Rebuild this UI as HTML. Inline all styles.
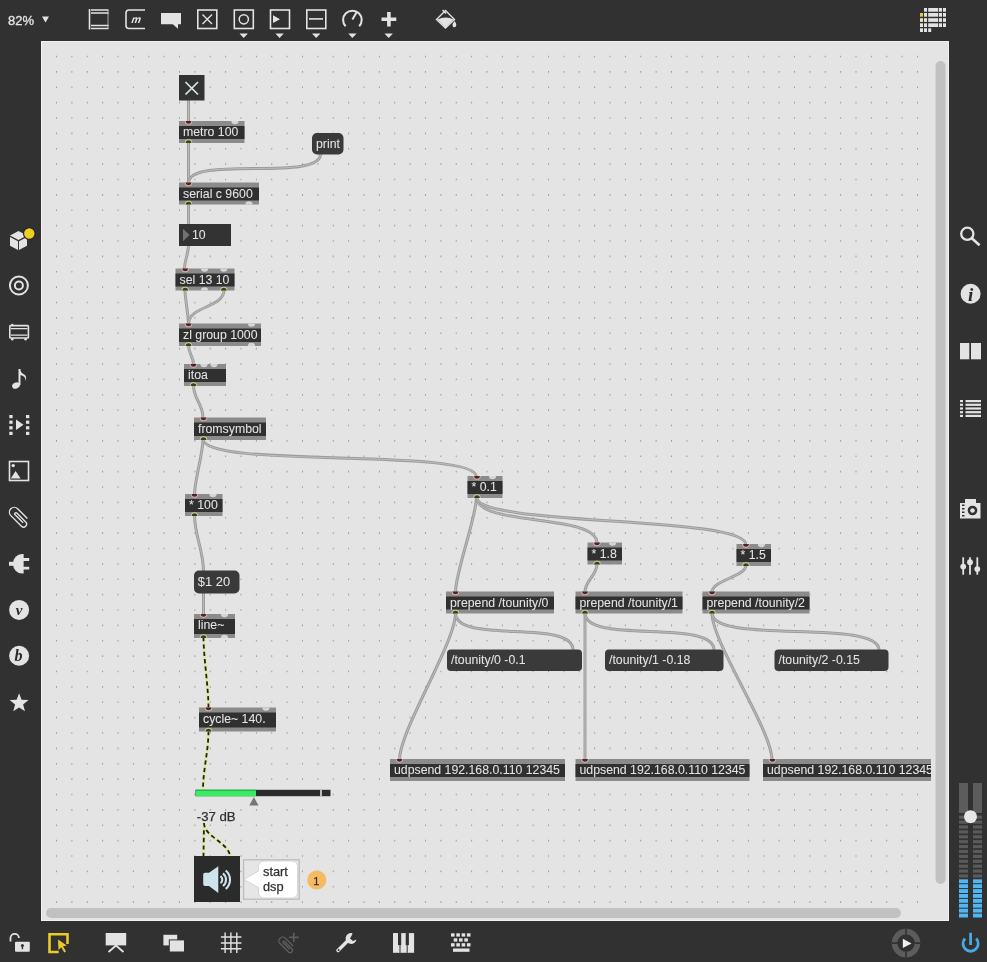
<!DOCTYPE html>
<html><head><meta charset="utf-8">
<style>
html,body{margin:0;padding:0;background:#313131;width:987px;height:962px;overflow:hidden}
svg{position:absolute;left:0;top:0;display:block;will-change:transform}
.ot{font-family:"Liberation Sans", sans-serif;font-size:12.3px;fill:#e4e4e4;stroke:#e4e4e4;stroke-width:0.05px}
.dt{font-family:"Liberation Sans", sans-serif;font-size:12.3px;fill:#303030;stroke:#303030;stroke-width:0.25px}
.ui{font-family:"Liberation Sans", sans-serif;font-size:13px;fill:#e6e6e6;stroke:#e6e6e6;stroke-width:0.3px}
</style></head><body>
<svg width="987" height="962" viewBox="0 0 987 962">
<rect width="987" height="962" fill="#313131"/>
<rect x="41" y="41" width="908" height="880" fill="#e4e4e4"/>
<path d="M56.00 55.70h1v1.6h-1zM71.38 55.70h1v1.6h-1zM86.75 55.70h1v1.6h-1zM102.12 55.70h1v1.6h-1zM117.50 55.70h1v1.6h-1zM132.88 55.70h1v1.6h-1zM148.25 55.70h1v1.6h-1zM163.62 55.70h1v1.6h-1zM179.00 55.70h1v1.6h-1zM194.38 55.70h1v1.6h-1zM209.75 55.70h1v1.6h-1zM225.12 55.70h1v1.6h-1zM240.50 55.70h1v1.6h-1zM255.88 55.70h1v1.6h-1zM271.25 55.70h1v1.6h-1zM286.62 55.70h1v1.6h-1zM302.00 55.70h1v1.6h-1zM317.38 55.70h1v1.6h-1zM332.75 55.70h1v1.6h-1zM348.12 55.70h1v1.6h-1zM363.50 55.70h1v1.6h-1zM378.88 55.70h1v1.6h-1zM394.25 55.70h1v1.6h-1zM409.62 55.70h1v1.6h-1zM425.00 55.70h1v1.6h-1zM440.38 55.70h1v1.6h-1zM455.75 55.70h1v1.6h-1zM471.12 55.70h1v1.6h-1zM486.50 55.70h1v1.6h-1zM501.88 55.70h1v1.6h-1zM517.25 55.70h1v1.6h-1zM532.62 55.70h1v1.6h-1zM548.00 55.70h1v1.6h-1zM563.38 55.70h1v1.6h-1zM578.75 55.70h1v1.6h-1zM594.12 55.70h1v1.6h-1zM609.50 55.70h1v1.6h-1zM624.88 55.70h1v1.6h-1zM640.25 55.70h1v1.6h-1zM655.62 55.70h1v1.6h-1zM671.00 55.70h1v1.6h-1zM686.38 55.70h1v1.6h-1zM701.75 55.70h1v1.6h-1zM717.12 55.70h1v1.6h-1zM732.50 55.70h1v1.6h-1zM747.88 55.70h1v1.6h-1zM763.25 55.70h1v1.6h-1zM778.62 55.70h1v1.6h-1zM794.00 55.70h1v1.6h-1zM809.38 55.70h1v1.6h-1zM824.75 55.70h1v1.6h-1zM840.12 55.70h1v1.6h-1zM855.50 55.70h1v1.6h-1zM870.88 55.70h1v1.6h-1zM886.25 55.70h1v1.6h-1zM901.62 55.70h1v1.6h-1zM917.00 55.70h1v1.6h-1zM56.00 71.08h1v1.6h-1zM71.38 71.08h1v1.6h-1zM86.75 71.08h1v1.6h-1zM102.12 71.08h1v1.6h-1zM117.50 71.08h1v1.6h-1zM132.88 71.08h1v1.6h-1zM148.25 71.08h1v1.6h-1zM163.62 71.08h1v1.6h-1zM179.00 71.08h1v1.6h-1zM194.38 71.08h1v1.6h-1zM209.75 71.08h1v1.6h-1zM225.12 71.08h1v1.6h-1zM240.50 71.08h1v1.6h-1zM255.88 71.08h1v1.6h-1zM271.25 71.08h1v1.6h-1zM286.62 71.08h1v1.6h-1zM302.00 71.08h1v1.6h-1zM317.38 71.08h1v1.6h-1zM332.75 71.08h1v1.6h-1zM348.12 71.08h1v1.6h-1zM363.50 71.08h1v1.6h-1zM378.88 71.08h1v1.6h-1zM394.25 71.08h1v1.6h-1zM409.62 71.08h1v1.6h-1zM425.00 71.08h1v1.6h-1zM440.38 71.08h1v1.6h-1zM455.75 71.08h1v1.6h-1zM471.12 71.08h1v1.6h-1zM486.50 71.08h1v1.6h-1zM501.88 71.08h1v1.6h-1zM517.25 71.08h1v1.6h-1zM532.62 71.08h1v1.6h-1zM548.00 71.08h1v1.6h-1zM563.38 71.08h1v1.6h-1zM578.75 71.08h1v1.6h-1zM594.12 71.08h1v1.6h-1zM609.50 71.08h1v1.6h-1zM624.88 71.08h1v1.6h-1zM640.25 71.08h1v1.6h-1zM655.62 71.08h1v1.6h-1zM671.00 71.08h1v1.6h-1zM686.38 71.08h1v1.6h-1zM701.75 71.08h1v1.6h-1zM717.12 71.08h1v1.6h-1zM732.50 71.08h1v1.6h-1zM747.88 71.08h1v1.6h-1zM763.25 71.08h1v1.6h-1zM778.62 71.08h1v1.6h-1zM794.00 71.08h1v1.6h-1zM809.38 71.08h1v1.6h-1zM824.75 71.08h1v1.6h-1zM840.12 71.08h1v1.6h-1zM855.50 71.08h1v1.6h-1zM870.88 71.08h1v1.6h-1zM886.25 71.08h1v1.6h-1zM901.62 71.08h1v1.6h-1zM917.00 71.08h1v1.6h-1zM56.00 86.45h1v1.6h-1zM71.38 86.45h1v1.6h-1zM86.75 86.45h1v1.6h-1zM102.12 86.45h1v1.6h-1zM117.50 86.45h1v1.6h-1zM132.88 86.45h1v1.6h-1zM148.25 86.45h1v1.6h-1zM163.62 86.45h1v1.6h-1zM179.00 86.45h1v1.6h-1zM194.38 86.45h1v1.6h-1zM209.75 86.45h1v1.6h-1zM225.12 86.45h1v1.6h-1zM240.50 86.45h1v1.6h-1zM255.88 86.45h1v1.6h-1zM271.25 86.45h1v1.6h-1zM286.62 86.45h1v1.6h-1zM302.00 86.45h1v1.6h-1zM317.38 86.45h1v1.6h-1zM332.75 86.45h1v1.6h-1zM348.12 86.45h1v1.6h-1zM363.50 86.45h1v1.6h-1zM378.88 86.45h1v1.6h-1zM394.25 86.45h1v1.6h-1zM409.62 86.45h1v1.6h-1zM425.00 86.45h1v1.6h-1zM440.38 86.45h1v1.6h-1zM455.75 86.45h1v1.6h-1zM471.12 86.45h1v1.6h-1zM486.50 86.45h1v1.6h-1zM501.88 86.45h1v1.6h-1zM517.25 86.45h1v1.6h-1zM532.62 86.45h1v1.6h-1zM548.00 86.45h1v1.6h-1zM563.38 86.45h1v1.6h-1zM578.75 86.45h1v1.6h-1zM594.12 86.45h1v1.6h-1zM609.50 86.45h1v1.6h-1zM624.88 86.45h1v1.6h-1zM640.25 86.45h1v1.6h-1zM655.62 86.45h1v1.6h-1zM671.00 86.45h1v1.6h-1zM686.38 86.45h1v1.6h-1zM701.75 86.45h1v1.6h-1zM717.12 86.45h1v1.6h-1zM732.50 86.45h1v1.6h-1zM747.88 86.45h1v1.6h-1zM763.25 86.45h1v1.6h-1zM778.62 86.45h1v1.6h-1zM794.00 86.45h1v1.6h-1zM809.38 86.45h1v1.6h-1zM824.75 86.45h1v1.6h-1zM840.12 86.45h1v1.6h-1zM855.50 86.45h1v1.6h-1zM870.88 86.45h1v1.6h-1zM886.25 86.45h1v1.6h-1zM901.62 86.45h1v1.6h-1zM917.00 86.45h1v1.6h-1zM56.00 101.83h1v1.6h-1zM71.38 101.83h1v1.6h-1zM86.75 101.83h1v1.6h-1zM102.12 101.83h1v1.6h-1zM117.50 101.83h1v1.6h-1zM132.88 101.83h1v1.6h-1zM148.25 101.83h1v1.6h-1zM163.62 101.83h1v1.6h-1zM179.00 101.83h1v1.6h-1zM194.38 101.83h1v1.6h-1zM209.75 101.83h1v1.6h-1zM225.12 101.83h1v1.6h-1zM240.50 101.83h1v1.6h-1zM255.88 101.83h1v1.6h-1zM271.25 101.83h1v1.6h-1zM286.62 101.83h1v1.6h-1zM302.00 101.83h1v1.6h-1zM317.38 101.83h1v1.6h-1zM332.75 101.83h1v1.6h-1zM348.12 101.83h1v1.6h-1zM363.50 101.83h1v1.6h-1zM378.88 101.83h1v1.6h-1zM394.25 101.83h1v1.6h-1zM409.62 101.83h1v1.6h-1zM425.00 101.83h1v1.6h-1zM440.38 101.83h1v1.6h-1zM455.75 101.83h1v1.6h-1zM471.12 101.83h1v1.6h-1zM486.50 101.83h1v1.6h-1zM501.88 101.83h1v1.6h-1zM517.25 101.83h1v1.6h-1zM532.62 101.83h1v1.6h-1zM548.00 101.83h1v1.6h-1zM563.38 101.83h1v1.6h-1zM578.75 101.83h1v1.6h-1zM594.12 101.83h1v1.6h-1zM609.50 101.83h1v1.6h-1zM624.88 101.83h1v1.6h-1zM640.25 101.83h1v1.6h-1zM655.62 101.83h1v1.6h-1zM671.00 101.83h1v1.6h-1zM686.38 101.83h1v1.6h-1zM701.75 101.83h1v1.6h-1zM717.12 101.83h1v1.6h-1zM732.50 101.83h1v1.6h-1zM747.88 101.83h1v1.6h-1zM763.25 101.83h1v1.6h-1zM778.62 101.83h1v1.6h-1zM794.00 101.83h1v1.6h-1zM809.38 101.83h1v1.6h-1zM824.75 101.83h1v1.6h-1zM840.12 101.83h1v1.6h-1zM855.50 101.83h1v1.6h-1zM870.88 101.83h1v1.6h-1zM886.25 101.83h1v1.6h-1zM901.62 101.83h1v1.6h-1zM917.00 101.83h1v1.6h-1zM56.00 117.20h1v1.6h-1zM71.38 117.20h1v1.6h-1zM86.75 117.20h1v1.6h-1zM102.12 117.20h1v1.6h-1zM117.50 117.20h1v1.6h-1zM132.88 117.20h1v1.6h-1zM148.25 117.20h1v1.6h-1zM163.62 117.20h1v1.6h-1zM179.00 117.20h1v1.6h-1zM194.38 117.20h1v1.6h-1zM209.75 117.20h1v1.6h-1zM225.12 117.20h1v1.6h-1zM240.50 117.20h1v1.6h-1zM255.88 117.20h1v1.6h-1zM271.25 117.20h1v1.6h-1zM286.62 117.20h1v1.6h-1zM302.00 117.20h1v1.6h-1zM317.38 117.20h1v1.6h-1zM332.75 117.20h1v1.6h-1zM348.12 117.20h1v1.6h-1zM363.50 117.20h1v1.6h-1zM378.88 117.20h1v1.6h-1zM394.25 117.20h1v1.6h-1zM409.62 117.20h1v1.6h-1zM425.00 117.20h1v1.6h-1zM440.38 117.20h1v1.6h-1zM455.75 117.20h1v1.6h-1zM471.12 117.20h1v1.6h-1zM486.50 117.20h1v1.6h-1zM501.88 117.20h1v1.6h-1zM517.25 117.20h1v1.6h-1zM532.62 117.20h1v1.6h-1zM548.00 117.20h1v1.6h-1zM563.38 117.20h1v1.6h-1zM578.75 117.20h1v1.6h-1zM594.12 117.20h1v1.6h-1zM609.50 117.20h1v1.6h-1zM624.88 117.20h1v1.6h-1zM640.25 117.20h1v1.6h-1zM655.62 117.20h1v1.6h-1zM671.00 117.20h1v1.6h-1zM686.38 117.20h1v1.6h-1zM701.75 117.20h1v1.6h-1zM717.12 117.20h1v1.6h-1zM732.50 117.20h1v1.6h-1zM747.88 117.20h1v1.6h-1zM763.25 117.20h1v1.6h-1zM778.62 117.20h1v1.6h-1zM794.00 117.20h1v1.6h-1zM809.38 117.20h1v1.6h-1zM824.75 117.20h1v1.6h-1zM840.12 117.20h1v1.6h-1zM855.50 117.20h1v1.6h-1zM870.88 117.20h1v1.6h-1zM886.25 117.20h1v1.6h-1zM901.62 117.20h1v1.6h-1zM917.00 117.20h1v1.6h-1zM56.00 132.57h1v1.6h-1zM71.38 132.57h1v1.6h-1zM86.75 132.57h1v1.6h-1zM102.12 132.57h1v1.6h-1zM117.50 132.57h1v1.6h-1zM132.88 132.57h1v1.6h-1zM148.25 132.57h1v1.6h-1zM163.62 132.57h1v1.6h-1zM179.00 132.57h1v1.6h-1zM194.38 132.57h1v1.6h-1zM209.75 132.57h1v1.6h-1zM225.12 132.57h1v1.6h-1zM240.50 132.57h1v1.6h-1zM255.88 132.57h1v1.6h-1zM271.25 132.57h1v1.6h-1zM286.62 132.57h1v1.6h-1zM302.00 132.57h1v1.6h-1zM317.38 132.57h1v1.6h-1zM332.75 132.57h1v1.6h-1zM348.12 132.57h1v1.6h-1zM363.50 132.57h1v1.6h-1zM378.88 132.57h1v1.6h-1zM394.25 132.57h1v1.6h-1zM409.62 132.57h1v1.6h-1zM425.00 132.57h1v1.6h-1zM440.38 132.57h1v1.6h-1zM455.75 132.57h1v1.6h-1zM471.12 132.57h1v1.6h-1zM486.50 132.57h1v1.6h-1zM501.88 132.57h1v1.6h-1zM517.25 132.57h1v1.6h-1zM532.62 132.57h1v1.6h-1zM548.00 132.57h1v1.6h-1zM563.38 132.57h1v1.6h-1zM578.75 132.57h1v1.6h-1zM594.12 132.57h1v1.6h-1zM609.50 132.57h1v1.6h-1zM624.88 132.57h1v1.6h-1zM640.25 132.57h1v1.6h-1zM655.62 132.57h1v1.6h-1zM671.00 132.57h1v1.6h-1zM686.38 132.57h1v1.6h-1zM701.75 132.57h1v1.6h-1zM717.12 132.57h1v1.6h-1zM732.50 132.57h1v1.6h-1zM747.88 132.57h1v1.6h-1zM763.25 132.57h1v1.6h-1zM778.62 132.57h1v1.6h-1zM794.00 132.57h1v1.6h-1zM809.38 132.57h1v1.6h-1zM824.75 132.57h1v1.6h-1zM840.12 132.57h1v1.6h-1zM855.50 132.57h1v1.6h-1zM870.88 132.57h1v1.6h-1zM886.25 132.57h1v1.6h-1zM901.62 132.57h1v1.6h-1zM917.00 132.57h1v1.6h-1zM56.00 147.95h1v1.6h-1zM71.38 147.95h1v1.6h-1zM86.75 147.95h1v1.6h-1zM102.12 147.95h1v1.6h-1zM117.50 147.95h1v1.6h-1zM132.88 147.95h1v1.6h-1zM148.25 147.95h1v1.6h-1zM163.62 147.95h1v1.6h-1zM179.00 147.95h1v1.6h-1zM194.38 147.95h1v1.6h-1zM209.75 147.95h1v1.6h-1zM225.12 147.95h1v1.6h-1zM240.50 147.95h1v1.6h-1zM255.88 147.95h1v1.6h-1zM271.25 147.95h1v1.6h-1zM286.62 147.95h1v1.6h-1zM302.00 147.95h1v1.6h-1zM317.38 147.95h1v1.6h-1zM332.75 147.95h1v1.6h-1zM348.12 147.95h1v1.6h-1zM363.50 147.95h1v1.6h-1zM378.88 147.95h1v1.6h-1zM394.25 147.95h1v1.6h-1zM409.62 147.95h1v1.6h-1zM425.00 147.95h1v1.6h-1zM440.38 147.95h1v1.6h-1zM455.75 147.95h1v1.6h-1zM471.12 147.95h1v1.6h-1zM486.50 147.95h1v1.6h-1zM501.88 147.95h1v1.6h-1zM517.25 147.95h1v1.6h-1zM532.62 147.95h1v1.6h-1zM548.00 147.95h1v1.6h-1zM563.38 147.95h1v1.6h-1zM578.75 147.95h1v1.6h-1zM594.12 147.95h1v1.6h-1zM609.50 147.95h1v1.6h-1zM624.88 147.95h1v1.6h-1zM640.25 147.95h1v1.6h-1zM655.62 147.95h1v1.6h-1zM671.00 147.95h1v1.6h-1zM686.38 147.95h1v1.6h-1zM701.75 147.95h1v1.6h-1zM717.12 147.95h1v1.6h-1zM732.50 147.95h1v1.6h-1zM747.88 147.95h1v1.6h-1zM763.25 147.95h1v1.6h-1zM778.62 147.95h1v1.6h-1zM794.00 147.95h1v1.6h-1zM809.38 147.95h1v1.6h-1zM824.75 147.95h1v1.6h-1zM840.12 147.95h1v1.6h-1zM855.50 147.95h1v1.6h-1zM870.88 147.95h1v1.6h-1zM886.25 147.95h1v1.6h-1zM901.62 147.95h1v1.6h-1zM917.00 147.95h1v1.6h-1zM56.00 163.32h1v1.6h-1zM71.38 163.32h1v1.6h-1zM86.75 163.32h1v1.6h-1zM102.12 163.32h1v1.6h-1zM117.50 163.32h1v1.6h-1zM132.88 163.32h1v1.6h-1zM148.25 163.32h1v1.6h-1zM163.62 163.32h1v1.6h-1zM179.00 163.32h1v1.6h-1zM194.38 163.32h1v1.6h-1zM209.75 163.32h1v1.6h-1zM225.12 163.32h1v1.6h-1zM240.50 163.32h1v1.6h-1zM255.88 163.32h1v1.6h-1zM271.25 163.32h1v1.6h-1zM286.62 163.32h1v1.6h-1zM302.00 163.32h1v1.6h-1zM317.38 163.32h1v1.6h-1zM332.75 163.32h1v1.6h-1zM348.12 163.32h1v1.6h-1zM363.50 163.32h1v1.6h-1zM378.88 163.32h1v1.6h-1zM394.25 163.32h1v1.6h-1zM409.62 163.32h1v1.6h-1zM425.00 163.32h1v1.6h-1zM440.38 163.32h1v1.6h-1zM455.75 163.32h1v1.6h-1zM471.12 163.32h1v1.6h-1zM486.50 163.32h1v1.6h-1zM501.88 163.32h1v1.6h-1zM517.25 163.32h1v1.6h-1zM532.62 163.32h1v1.6h-1zM548.00 163.32h1v1.6h-1zM563.38 163.32h1v1.6h-1zM578.75 163.32h1v1.6h-1zM594.12 163.32h1v1.6h-1zM609.50 163.32h1v1.6h-1zM624.88 163.32h1v1.6h-1zM640.25 163.32h1v1.6h-1zM655.62 163.32h1v1.6h-1zM671.00 163.32h1v1.6h-1zM686.38 163.32h1v1.6h-1zM701.75 163.32h1v1.6h-1zM717.12 163.32h1v1.6h-1zM732.50 163.32h1v1.6h-1zM747.88 163.32h1v1.6h-1zM763.25 163.32h1v1.6h-1zM778.62 163.32h1v1.6h-1zM794.00 163.32h1v1.6h-1zM809.38 163.32h1v1.6h-1zM824.75 163.32h1v1.6h-1zM840.12 163.32h1v1.6h-1zM855.50 163.32h1v1.6h-1zM870.88 163.32h1v1.6h-1zM886.25 163.32h1v1.6h-1zM901.62 163.32h1v1.6h-1zM917.00 163.32h1v1.6h-1zM56.00 178.70h1v1.6h-1zM71.38 178.70h1v1.6h-1zM86.75 178.70h1v1.6h-1zM102.12 178.70h1v1.6h-1zM117.50 178.70h1v1.6h-1zM132.88 178.70h1v1.6h-1zM148.25 178.70h1v1.6h-1zM163.62 178.70h1v1.6h-1zM179.00 178.70h1v1.6h-1zM194.38 178.70h1v1.6h-1zM209.75 178.70h1v1.6h-1zM225.12 178.70h1v1.6h-1zM240.50 178.70h1v1.6h-1zM255.88 178.70h1v1.6h-1zM271.25 178.70h1v1.6h-1zM286.62 178.70h1v1.6h-1zM302.00 178.70h1v1.6h-1zM317.38 178.70h1v1.6h-1zM332.75 178.70h1v1.6h-1zM348.12 178.70h1v1.6h-1zM363.50 178.70h1v1.6h-1zM378.88 178.70h1v1.6h-1zM394.25 178.70h1v1.6h-1zM409.62 178.70h1v1.6h-1zM425.00 178.70h1v1.6h-1zM440.38 178.70h1v1.6h-1zM455.75 178.70h1v1.6h-1zM471.12 178.70h1v1.6h-1zM486.50 178.70h1v1.6h-1zM501.88 178.70h1v1.6h-1zM517.25 178.70h1v1.6h-1zM532.62 178.70h1v1.6h-1zM548.00 178.70h1v1.6h-1zM563.38 178.70h1v1.6h-1zM578.75 178.70h1v1.6h-1zM594.12 178.70h1v1.6h-1zM609.50 178.70h1v1.6h-1zM624.88 178.70h1v1.6h-1zM640.25 178.70h1v1.6h-1zM655.62 178.70h1v1.6h-1zM671.00 178.70h1v1.6h-1zM686.38 178.70h1v1.6h-1zM701.75 178.70h1v1.6h-1zM717.12 178.70h1v1.6h-1zM732.50 178.70h1v1.6h-1zM747.88 178.70h1v1.6h-1zM763.25 178.70h1v1.6h-1zM778.62 178.70h1v1.6h-1zM794.00 178.70h1v1.6h-1zM809.38 178.70h1v1.6h-1zM824.75 178.70h1v1.6h-1zM840.12 178.70h1v1.6h-1zM855.50 178.70h1v1.6h-1zM870.88 178.70h1v1.6h-1zM886.25 178.70h1v1.6h-1zM901.62 178.70h1v1.6h-1zM917.00 178.70h1v1.6h-1zM56.00 194.07h1v1.6h-1zM71.38 194.07h1v1.6h-1zM86.75 194.07h1v1.6h-1zM102.12 194.07h1v1.6h-1zM117.50 194.07h1v1.6h-1zM132.88 194.07h1v1.6h-1zM148.25 194.07h1v1.6h-1zM163.62 194.07h1v1.6h-1zM179.00 194.07h1v1.6h-1zM194.38 194.07h1v1.6h-1zM209.75 194.07h1v1.6h-1zM225.12 194.07h1v1.6h-1zM240.50 194.07h1v1.6h-1zM255.88 194.07h1v1.6h-1zM271.25 194.07h1v1.6h-1zM286.62 194.07h1v1.6h-1zM302.00 194.07h1v1.6h-1zM317.38 194.07h1v1.6h-1zM332.75 194.07h1v1.6h-1zM348.12 194.07h1v1.6h-1zM363.50 194.07h1v1.6h-1zM378.88 194.07h1v1.6h-1zM394.25 194.07h1v1.6h-1zM409.62 194.07h1v1.6h-1zM425.00 194.07h1v1.6h-1zM440.38 194.07h1v1.6h-1zM455.75 194.07h1v1.6h-1zM471.12 194.07h1v1.6h-1zM486.50 194.07h1v1.6h-1zM501.88 194.07h1v1.6h-1zM517.25 194.07h1v1.6h-1zM532.62 194.07h1v1.6h-1zM548.00 194.07h1v1.6h-1zM563.38 194.07h1v1.6h-1zM578.75 194.07h1v1.6h-1zM594.12 194.07h1v1.6h-1zM609.50 194.07h1v1.6h-1zM624.88 194.07h1v1.6h-1zM640.25 194.07h1v1.6h-1zM655.62 194.07h1v1.6h-1zM671.00 194.07h1v1.6h-1zM686.38 194.07h1v1.6h-1zM701.75 194.07h1v1.6h-1zM717.12 194.07h1v1.6h-1zM732.50 194.07h1v1.6h-1zM747.88 194.07h1v1.6h-1zM763.25 194.07h1v1.6h-1zM778.62 194.07h1v1.6h-1zM794.00 194.07h1v1.6h-1zM809.38 194.07h1v1.6h-1zM824.75 194.07h1v1.6h-1zM840.12 194.07h1v1.6h-1zM855.50 194.07h1v1.6h-1zM870.88 194.07h1v1.6h-1zM886.25 194.07h1v1.6h-1zM901.62 194.07h1v1.6h-1zM917.00 194.07h1v1.6h-1zM56.00 209.45h1v1.6h-1zM71.38 209.45h1v1.6h-1zM86.75 209.45h1v1.6h-1zM102.12 209.45h1v1.6h-1zM117.50 209.45h1v1.6h-1zM132.88 209.45h1v1.6h-1zM148.25 209.45h1v1.6h-1zM163.62 209.45h1v1.6h-1zM179.00 209.45h1v1.6h-1zM194.38 209.45h1v1.6h-1zM209.75 209.45h1v1.6h-1zM225.12 209.45h1v1.6h-1zM240.50 209.45h1v1.6h-1zM255.88 209.45h1v1.6h-1zM271.25 209.45h1v1.6h-1zM286.62 209.45h1v1.6h-1zM302.00 209.45h1v1.6h-1zM317.38 209.45h1v1.6h-1zM332.75 209.45h1v1.6h-1zM348.12 209.45h1v1.6h-1zM363.50 209.45h1v1.6h-1zM378.88 209.45h1v1.6h-1zM394.25 209.45h1v1.6h-1zM409.62 209.45h1v1.6h-1zM425.00 209.45h1v1.6h-1zM440.38 209.45h1v1.6h-1zM455.75 209.45h1v1.6h-1zM471.12 209.45h1v1.6h-1zM486.50 209.45h1v1.6h-1zM501.88 209.45h1v1.6h-1zM517.25 209.45h1v1.6h-1zM532.62 209.45h1v1.6h-1zM548.00 209.45h1v1.6h-1zM563.38 209.45h1v1.6h-1zM578.75 209.45h1v1.6h-1zM594.12 209.45h1v1.6h-1zM609.50 209.45h1v1.6h-1zM624.88 209.45h1v1.6h-1zM640.25 209.45h1v1.6h-1zM655.62 209.45h1v1.6h-1zM671.00 209.45h1v1.6h-1zM686.38 209.45h1v1.6h-1zM701.75 209.45h1v1.6h-1zM717.12 209.45h1v1.6h-1zM732.50 209.45h1v1.6h-1zM747.88 209.45h1v1.6h-1zM763.25 209.45h1v1.6h-1zM778.62 209.45h1v1.6h-1zM794.00 209.45h1v1.6h-1zM809.38 209.45h1v1.6h-1zM824.75 209.45h1v1.6h-1zM840.12 209.45h1v1.6h-1zM855.50 209.45h1v1.6h-1zM870.88 209.45h1v1.6h-1zM886.25 209.45h1v1.6h-1zM901.62 209.45h1v1.6h-1zM917.00 209.45h1v1.6h-1zM56.00 224.82h1v1.6h-1zM71.38 224.82h1v1.6h-1zM86.75 224.82h1v1.6h-1zM102.12 224.82h1v1.6h-1zM117.50 224.82h1v1.6h-1zM132.88 224.82h1v1.6h-1zM148.25 224.82h1v1.6h-1zM163.62 224.82h1v1.6h-1zM179.00 224.82h1v1.6h-1zM194.38 224.82h1v1.6h-1zM209.75 224.82h1v1.6h-1zM225.12 224.82h1v1.6h-1zM240.50 224.82h1v1.6h-1zM255.88 224.82h1v1.6h-1zM271.25 224.82h1v1.6h-1zM286.62 224.82h1v1.6h-1zM302.00 224.82h1v1.6h-1zM317.38 224.82h1v1.6h-1zM332.75 224.82h1v1.6h-1zM348.12 224.82h1v1.6h-1zM363.50 224.82h1v1.6h-1zM378.88 224.82h1v1.6h-1zM394.25 224.82h1v1.6h-1zM409.62 224.82h1v1.6h-1zM425.00 224.82h1v1.6h-1zM440.38 224.82h1v1.6h-1zM455.75 224.82h1v1.6h-1zM471.12 224.82h1v1.6h-1zM486.50 224.82h1v1.6h-1zM501.88 224.82h1v1.6h-1zM517.25 224.82h1v1.6h-1zM532.62 224.82h1v1.6h-1zM548.00 224.82h1v1.6h-1zM563.38 224.82h1v1.6h-1zM578.75 224.82h1v1.6h-1zM594.12 224.82h1v1.6h-1zM609.50 224.82h1v1.6h-1zM624.88 224.82h1v1.6h-1zM640.25 224.82h1v1.6h-1zM655.62 224.82h1v1.6h-1zM671.00 224.82h1v1.6h-1zM686.38 224.82h1v1.6h-1zM701.75 224.82h1v1.6h-1zM717.12 224.82h1v1.6h-1zM732.50 224.82h1v1.6h-1zM747.88 224.82h1v1.6h-1zM763.25 224.82h1v1.6h-1zM778.62 224.82h1v1.6h-1zM794.00 224.82h1v1.6h-1zM809.38 224.82h1v1.6h-1zM824.75 224.82h1v1.6h-1zM840.12 224.82h1v1.6h-1zM855.50 224.82h1v1.6h-1zM870.88 224.82h1v1.6h-1zM886.25 224.82h1v1.6h-1zM901.62 224.82h1v1.6h-1zM917.00 224.82h1v1.6h-1zM56.00 240.20h1v1.6h-1zM71.38 240.20h1v1.6h-1zM86.75 240.20h1v1.6h-1zM102.12 240.20h1v1.6h-1zM117.50 240.20h1v1.6h-1zM132.88 240.20h1v1.6h-1zM148.25 240.20h1v1.6h-1zM163.62 240.20h1v1.6h-1zM179.00 240.20h1v1.6h-1zM194.38 240.20h1v1.6h-1zM209.75 240.20h1v1.6h-1zM225.12 240.20h1v1.6h-1zM240.50 240.20h1v1.6h-1zM255.88 240.20h1v1.6h-1zM271.25 240.20h1v1.6h-1zM286.62 240.20h1v1.6h-1zM302.00 240.20h1v1.6h-1zM317.38 240.20h1v1.6h-1zM332.75 240.20h1v1.6h-1zM348.12 240.20h1v1.6h-1zM363.50 240.20h1v1.6h-1zM378.88 240.20h1v1.6h-1zM394.25 240.20h1v1.6h-1zM409.62 240.20h1v1.6h-1zM425.00 240.20h1v1.6h-1zM440.38 240.20h1v1.6h-1zM455.75 240.20h1v1.6h-1zM471.12 240.20h1v1.6h-1zM486.50 240.20h1v1.6h-1zM501.88 240.20h1v1.6h-1zM517.25 240.20h1v1.6h-1zM532.62 240.20h1v1.6h-1zM548.00 240.20h1v1.6h-1zM563.38 240.20h1v1.6h-1zM578.75 240.20h1v1.6h-1zM594.12 240.20h1v1.6h-1zM609.50 240.20h1v1.6h-1zM624.88 240.20h1v1.6h-1zM640.25 240.20h1v1.6h-1zM655.62 240.20h1v1.6h-1zM671.00 240.20h1v1.6h-1zM686.38 240.20h1v1.6h-1zM701.75 240.20h1v1.6h-1zM717.12 240.20h1v1.6h-1zM732.50 240.20h1v1.6h-1zM747.88 240.20h1v1.6h-1zM763.25 240.20h1v1.6h-1zM778.62 240.20h1v1.6h-1zM794.00 240.20h1v1.6h-1zM809.38 240.20h1v1.6h-1zM824.75 240.20h1v1.6h-1zM840.12 240.20h1v1.6h-1zM855.50 240.20h1v1.6h-1zM870.88 240.20h1v1.6h-1zM886.25 240.20h1v1.6h-1zM901.62 240.20h1v1.6h-1zM917.00 240.20h1v1.6h-1zM56.00 255.57h1v1.6h-1zM71.38 255.57h1v1.6h-1zM86.75 255.57h1v1.6h-1zM102.12 255.57h1v1.6h-1zM117.50 255.57h1v1.6h-1zM132.88 255.57h1v1.6h-1zM148.25 255.57h1v1.6h-1zM163.62 255.57h1v1.6h-1zM179.00 255.57h1v1.6h-1zM194.38 255.57h1v1.6h-1zM209.75 255.57h1v1.6h-1zM225.12 255.57h1v1.6h-1zM240.50 255.57h1v1.6h-1zM255.88 255.57h1v1.6h-1zM271.25 255.57h1v1.6h-1zM286.62 255.57h1v1.6h-1zM302.00 255.57h1v1.6h-1zM317.38 255.57h1v1.6h-1zM332.75 255.57h1v1.6h-1zM348.12 255.57h1v1.6h-1zM363.50 255.57h1v1.6h-1zM378.88 255.57h1v1.6h-1zM394.25 255.57h1v1.6h-1zM409.62 255.57h1v1.6h-1zM425.00 255.57h1v1.6h-1zM440.38 255.57h1v1.6h-1zM455.75 255.57h1v1.6h-1zM471.12 255.57h1v1.6h-1zM486.50 255.57h1v1.6h-1zM501.88 255.57h1v1.6h-1zM517.25 255.57h1v1.6h-1zM532.62 255.57h1v1.6h-1zM548.00 255.57h1v1.6h-1zM563.38 255.57h1v1.6h-1zM578.75 255.57h1v1.6h-1zM594.12 255.57h1v1.6h-1zM609.50 255.57h1v1.6h-1zM624.88 255.57h1v1.6h-1zM640.25 255.57h1v1.6h-1zM655.62 255.57h1v1.6h-1zM671.00 255.57h1v1.6h-1zM686.38 255.57h1v1.6h-1zM701.75 255.57h1v1.6h-1zM717.12 255.57h1v1.6h-1zM732.50 255.57h1v1.6h-1zM747.88 255.57h1v1.6h-1zM763.25 255.57h1v1.6h-1zM778.62 255.57h1v1.6h-1zM794.00 255.57h1v1.6h-1zM809.38 255.57h1v1.6h-1zM824.75 255.57h1v1.6h-1zM840.12 255.57h1v1.6h-1zM855.50 255.57h1v1.6h-1zM870.88 255.57h1v1.6h-1zM886.25 255.57h1v1.6h-1zM901.62 255.57h1v1.6h-1zM917.00 255.57h1v1.6h-1zM56.00 270.95h1v1.6h-1zM71.38 270.95h1v1.6h-1zM86.75 270.95h1v1.6h-1zM102.12 270.95h1v1.6h-1zM117.50 270.95h1v1.6h-1zM132.88 270.95h1v1.6h-1zM148.25 270.95h1v1.6h-1zM163.62 270.95h1v1.6h-1zM179.00 270.95h1v1.6h-1zM194.38 270.95h1v1.6h-1zM209.75 270.95h1v1.6h-1zM225.12 270.95h1v1.6h-1zM240.50 270.95h1v1.6h-1zM255.88 270.95h1v1.6h-1zM271.25 270.95h1v1.6h-1zM286.62 270.95h1v1.6h-1zM302.00 270.95h1v1.6h-1zM317.38 270.95h1v1.6h-1zM332.75 270.95h1v1.6h-1zM348.12 270.95h1v1.6h-1zM363.50 270.95h1v1.6h-1zM378.88 270.95h1v1.6h-1zM394.25 270.95h1v1.6h-1zM409.62 270.95h1v1.6h-1zM425.00 270.95h1v1.6h-1zM440.38 270.95h1v1.6h-1zM455.75 270.95h1v1.6h-1zM471.12 270.95h1v1.6h-1zM486.50 270.95h1v1.6h-1zM501.88 270.95h1v1.6h-1zM517.25 270.95h1v1.6h-1zM532.62 270.95h1v1.6h-1zM548.00 270.95h1v1.6h-1zM563.38 270.95h1v1.6h-1zM578.75 270.95h1v1.6h-1zM594.12 270.95h1v1.6h-1zM609.50 270.95h1v1.6h-1zM624.88 270.95h1v1.6h-1zM640.25 270.95h1v1.6h-1zM655.62 270.95h1v1.6h-1zM671.00 270.95h1v1.6h-1zM686.38 270.95h1v1.6h-1zM701.75 270.95h1v1.6h-1zM717.12 270.95h1v1.6h-1zM732.50 270.95h1v1.6h-1zM747.88 270.95h1v1.6h-1zM763.25 270.95h1v1.6h-1zM778.62 270.95h1v1.6h-1zM794.00 270.95h1v1.6h-1zM809.38 270.95h1v1.6h-1zM824.75 270.95h1v1.6h-1zM840.12 270.95h1v1.6h-1zM855.50 270.95h1v1.6h-1zM870.88 270.95h1v1.6h-1zM886.25 270.95h1v1.6h-1zM901.62 270.95h1v1.6h-1zM917.00 270.95h1v1.6h-1zM56.00 286.32h1v1.6h-1zM71.38 286.32h1v1.6h-1zM86.75 286.32h1v1.6h-1zM102.12 286.32h1v1.6h-1zM117.50 286.32h1v1.6h-1zM132.88 286.32h1v1.6h-1zM148.25 286.32h1v1.6h-1zM163.62 286.32h1v1.6h-1zM179.00 286.32h1v1.6h-1zM194.38 286.32h1v1.6h-1zM209.75 286.32h1v1.6h-1zM225.12 286.32h1v1.6h-1zM240.50 286.32h1v1.6h-1zM255.88 286.32h1v1.6h-1zM271.25 286.32h1v1.6h-1zM286.62 286.32h1v1.6h-1zM302.00 286.32h1v1.6h-1zM317.38 286.32h1v1.6h-1zM332.75 286.32h1v1.6h-1zM348.12 286.32h1v1.6h-1zM363.50 286.32h1v1.6h-1zM378.88 286.32h1v1.6h-1zM394.25 286.32h1v1.6h-1zM409.62 286.32h1v1.6h-1zM425.00 286.32h1v1.6h-1zM440.38 286.32h1v1.6h-1zM455.75 286.32h1v1.6h-1zM471.12 286.32h1v1.6h-1zM486.50 286.32h1v1.6h-1zM501.88 286.32h1v1.6h-1zM517.25 286.32h1v1.6h-1zM532.62 286.32h1v1.6h-1zM548.00 286.32h1v1.6h-1zM563.38 286.32h1v1.6h-1zM578.75 286.32h1v1.6h-1zM594.12 286.32h1v1.6h-1zM609.50 286.32h1v1.6h-1zM624.88 286.32h1v1.6h-1zM640.25 286.32h1v1.6h-1zM655.62 286.32h1v1.6h-1zM671.00 286.32h1v1.6h-1zM686.38 286.32h1v1.6h-1zM701.75 286.32h1v1.6h-1zM717.12 286.32h1v1.6h-1zM732.50 286.32h1v1.6h-1zM747.88 286.32h1v1.6h-1zM763.25 286.32h1v1.6h-1zM778.62 286.32h1v1.6h-1zM794.00 286.32h1v1.6h-1zM809.38 286.32h1v1.6h-1zM824.75 286.32h1v1.6h-1zM840.12 286.32h1v1.6h-1zM855.50 286.32h1v1.6h-1zM870.88 286.32h1v1.6h-1zM886.25 286.32h1v1.6h-1zM901.62 286.32h1v1.6h-1zM917.00 286.32h1v1.6h-1zM56.00 301.70h1v1.6h-1zM71.38 301.70h1v1.6h-1zM86.75 301.70h1v1.6h-1zM102.12 301.70h1v1.6h-1zM117.50 301.70h1v1.6h-1zM132.88 301.70h1v1.6h-1zM148.25 301.70h1v1.6h-1zM163.62 301.70h1v1.6h-1zM179.00 301.70h1v1.6h-1zM194.38 301.70h1v1.6h-1zM209.75 301.70h1v1.6h-1zM225.12 301.70h1v1.6h-1zM240.50 301.70h1v1.6h-1zM255.88 301.70h1v1.6h-1zM271.25 301.70h1v1.6h-1zM286.62 301.70h1v1.6h-1zM302.00 301.70h1v1.6h-1zM317.38 301.70h1v1.6h-1zM332.75 301.70h1v1.6h-1zM348.12 301.70h1v1.6h-1zM363.50 301.70h1v1.6h-1zM378.88 301.70h1v1.6h-1zM394.25 301.70h1v1.6h-1zM409.62 301.70h1v1.6h-1zM425.00 301.70h1v1.6h-1zM440.38 301.70h1v1.6h-1zM455.75 301.70h1v1.6h-1zM471.12 301.70h1v1.6h-1zM486.50 301.70h1v1.6h-1zM501.88 301.70h1v1.6h-1zM517.25 301.70h1v1.6h-1zM532.62 301.70h1v1.6h-1zM548.00 301.70h1v1.6h-1zM563.38 301.70h1v1.6h-1zM578.75 301.70h1v1.6h-1zM594.12 301.70h1v1.6h-1zM609.50 301.70h1v1.6h-1zM624.88 301.70h1v1.6h-1zM640.25 301.70h1v1.6h-1zM655.62 301.70h1v1.6h-1zM671.00 301.70h1v1.6h-1zM686.38 301.70h1v1.6h-1zM701.75 301.70h1v1.6h-1zM717.12 301.70h1v1.6h-1zM732.50 301.70h1v1.6h-1zM747.88 301.70h1v1.6h-1zM763.25 301.70h1v1.6h-1zM778.62 301.70h1v1.6h-1zM794.00 301.70h1v1.6h-1zM809.38 301.70h1v1.6h-1zM824.75 301.70h1v1.6h-1zM840.12 301.70h1v1.6h-1zM855.50 301.70h1v1.6h-1zM870.88 301.70h1v1.6h-1zM886.25 301.70h1v1.6h-1zM901.62 301.70h1v1.6h-1zM917.00 301.70h1v1.6h-1zM56.00 317.07h1v1.6h-1zM71.38 317.07h1v1.6h-1zM86.75 317.07h1v1.6h-1zM102.12 317.07h1v1.6h-1zM117.50 317.07h1v1.6h-1zM132.88 317.07h1v1.6h-1zM148.25 317.07h1v1.6h-1zM163.62 317.07h1v1.6h-1zM179.00 317.07h1v1.6h-1zM194.38 317.07h1v1.6h-1zM209.75 317.07h1v1.6h-1zM225.12 317.07h1v1.6h-1zM240.50 317.07h1v1.6h-1zM255.88 317.07h1v1.6h-1zM271.25 317.07h1v1.6h-1zM286.62 317.07h1v1.6h-1zM302.00 317.07h1v1.6h-1zM317.38 317.07h1v1.6h-1zM332.75 317.07h1v1.6h-1zM348.12 317.07h1v1.6h-1zM363.50 317.07h1v1.6h-1zM378.88 317.07h1v1.6h-1zM394.25 317.07h1v1.6h-1zM409.62 317.07h1v1.6h-1zM425.00 317.07h1v1.6h-1zM440.38 317.07h1v1.6h-1zM455.75 317.07h1v1.6h-1zM471.12 317.07h1v1.6h-1zM486.50 317.07h1v1.6h-1zM501.88 317.07h1v1.6h-1zM517.25 317.07h1v1.6h-1zM532.62 317.07h1v1.6h-1zM548.00 317.07h1v1.6h-1zM563.38 317.07h1v1.6h-1zM578.75 317.07h1v1.6h-1zM594.12 317.07h1v1.6h-1zM609.50 317.07h1v1.6h-1zM624.88 317.07h1v1.6h-1zM640.25 317.07h1v1.6h-1zM655.62 317.07h1v1.6h-1zM671.00 317.07h1v1.6h-1zM686.38 317.07h1v1.6h-1zM701.75 317.07h1v1.6h-1zM717.12 317.07h1v1.6h-1zM732.50 317.07h1v1.6h-1zM747.88 317.07h1v1.6h-1zM763.25 317.07h1v1.6h-1zM778.62 317.07h1v1.6h-1zM794.00 317.07h1v1.6h-1zM809.38 317.07h1v1.6h-1zM824.75 317.07h1v1.6h-1zM840.12 317.07h1v1.6h-1zM855.50 317.07h1v1.6h-1zM870.88 317.07h1v1.6h-1zM886.25 317.07h1v1.6h-1zM901.62 317.07h1v1.6h-1zM917.00 317.07h1v1.6h-1zM56.00 332.45h1v1.6h-1zM71.38 332.45h1v1.6h-1zM86.75 332.45h1v1.6h-1zM102.12 332.45h1v1.6h-1zM117.50 332.45h1v1.6h-1zM132.88 332.45h1v1.6h-1zM148.25 332.45h1v1.6h-1zM163.62 332.45h1v1.6h-1zM179.00 332.45h1v1.6h-1zM194.38 332.45h1v1.6h-1zM209.75 332.45h1v1.6h-1zM225.12 332.45h1v1.6h-1zM240.50 332.45h1v1.6h-1zM255.88 332.45h1v1.6h-1zM271.25 332.45h1v1.6h-1zM286.62 332.45h1v1.6h-1zM302.00 332.45h1v1.6h-1zM317.38 332.45h1v1.6h-1zM332.75 332.45h1v1.6h-1zM348.12 332.45h1v1.6h-1zM363.50 332.45h1v1.6h-1zM378.88 332.45h1v1.6h-1zM394.25 332.45h1v1.6h-1zM409.62 332.45h1v1.6h-1zM425.00 332.45h1v1.6h-1zM440.38 332.45h1v1.6h-1zM455.75 332.45h1v1.6h-1zM471.12 332.45h1v1.6h-1zM486.50 332.45h1v1.6h-1zM501.88 332.45h1v1.6h-1zM517.25 332.45h1v1.6h-1zM532.62 332.45h1v1.6h-1zM548.00 332.45h1v1.6h-1zM563.38 332.45h1v1.6h-1zM578.75 332.45h1v1.6h-1zM594.12 332.45h1v1.6h-1zM609.50 332.45h1v1.6h-1zM624.88 332.45h1v1.6h-1zM640.25 332.45h1v1.6h-1zM655.62 332.45h1v1.6h-1zM671.00 332.45h1v1.6h-1zM686.38 332.45h1v1.6h-1zM701.75 332.45h1v1.6h-1zM717.12 332.45h1v1.6h-1zM732.50 332.45h1v1.6h-1zM747.88 332.45h1v1.6h-1zM763.25 332.45h1v1.6h-1zM778.62 332.45h1v1.6h-1zM794.00 332.45h1v1.6h-1zM809.38 332.45h1v1.6h-1zM824.75 332.45h1v1.6h-1zM840.12 332.45h1v1.6h-1zM855.50 332.45h1v1.6h-1zM870.88 332.45h1v1.6h-1zM886.25 332.45h1v1.6h-1zM901.62 332.45h1v1.6h-1zM917.00 332.45h1v1.6h-1zM56.00 347.82h1v1.6h-1zM71.38 347.82h1v1.6h-1zM86.75 347.82h1v1.6h-1zM102.12 347.82h1v1.6h-1zM117.50 347.82h1v1.6h-1zM132.88 347.82h1v1.6h-1zM148.25 347.82h1v1.6h-1zM163.62 347.82h1v1.6h-1zM179.00 347.82h1v1.6h-1zM194.38 347.82h1v1.6h-1zM209.75 347.82h1v1.6h-1zM225.12 347.82h1v1.6h-1zM240.50 347.82h1v1.6h-1zM255.88 347.82h1v1.6h-1zM271.25 347.82h1v1.6h-1zM286.62 347.82h1v1.6h-1zM302.00 347.82h1v1.6h-1zM317.38 347.82h1v1.6h-1zM332.75 347.82h1v1.6h-1zM348.12 347.82h1v1.6h-1zM363.50 347.82h1v1.6h-1zM378.88 347.82h1v1.6h-1zM394.25 347.82h1v1.6h-1zM409.62 347.82h1v1.6h-1zM425.00 347.82h1v1.6h-1zM440.38 347.82h1v1.6h-1zM455.75 347.82h1v1.6h-1zM471.12 347.82h1v1.6h-1zM486.50 347.82h1v1.6h-1zM501.88 347.82h1v1.6h-1zM517.25 347.82h1v1.6h-1zM532.62 347.82h1v1.6h-1zM548.00 347.82h1v1.6h-1zM563.38 347.82h1v1.6h-1zM578.75 347.82h1v1.6h-1zM594.12 347.82h1v1.6h-1zM609.50 347.82h1v1.6h-1zM624.88 347.82h1v1.6h-1zM640.25 347.82h1v1.6h-1zM655.62 347.82h1v1.6h-1zM671.00 347.82h1v1.6h-1zM686.38 347.82h1v1.6h-1zM701.75 347.82h1v1.6h-1zM717.12 347.82h1v1.6h-1zM732.50 347.82h1v1.6h-1zM747.88 347.82h1v1.6h-1zM763.25 347.82h1v1.6h-1zM778.62 347.82h1v1.6h-1zM794.00 347.82h1v1.6h-1zM809.38 347.82h1v1.6h-1zM824.75 347.82h1v1.6h-1zM840.12 347.82h1v1.6h-1zM855.50 347.82h1v1.6h-1zM870.88 347.82h1v1.6h-1zM886.25 347.82h1v1.6h-1zM901.62 347.82h1v1.6h-1zM917.00 347.82h1v1.6h-1zM56.00 363.20h1v1.6h-1zM71.38 363.20h1v1.6h-1zM86.75 363.20h1v1.6h-1zM102.12 363.20h1v1.6h-1zM117.50 363.20h1v1.6h-1zM132.88 363.20h1v1.6h-1zM148.25 363.20h1v1.6h-1zM163.62 363.20h1v1.6h-1zM179.00 363.20h1v1.6h-1zM194.38 363.20h1v1.6h-1zM209.75 363.20h1v1.6h-1zM225.12 363.20h1v1.6h-1zM240.50 363.20h1v1.6h-1zM255.88 363.20h1v1.6h-1zM271.25 363.20h1v1.6h-1zM286.62 363.20h1v1.6h-1zM302.00 363.20h1v1.6h-1zM317.38 363.20h1v1.6h-1zM332.75 363.20h1v1.6h-1zM348.12 363.20h1v1.6h-1zM363.50 363.20h1v1.6h-1zM378.88 363.20h1v1.6h-1zM394.25 363.20h1v1.6h-1zM409.62 363.20h1v1.6h-1zM425.00 363.20h1v1.6h-1zM440.38 363.20h1v1.6h-1zM455.75 363.20h1v1.6h-1zM471.12 363.20h1v1.6h-1zM486.50 363.20h1v1.6h-1zM501.88 363.20h1v1.6h-1zM517.25 363.20h1v1.6h-1zM532.62 363.20h1v1.6h-1zM548.00 363.20h1v1.6h-1zM563.38 363.20h1v1.6h-1zM578.75 363.20h1v1.6h-1zM594.12 363.20h1v1.6h-1zM609.50 363.20h1v1.6h-1zM624.88 363.20h1v1.6h-1zM640.25 363.20h1v1.6h-1zM655.62 363.20h1v1.6h-1zM671.00 363.20h1v1.6h-1zM686.38 363.20h1v1.6h-1zM701.75 363.20h1v1.6h-1zM717.12 363.20h1v1.6h-1zM732.50 363.20h1v1.6h-1zM747.88 363.20h1v1.6h-1zM763.25 363.20h1v1.6h-1zM778.62 363.20h1v1.6h-1zM794.00 363.20h1v1.6h-1zM809.38 363.20h1v1.6h-1zM824.75 363.20h1v1.6h-1zM840.12 363.20h1v1.6h-1zM855.50 363.20h1v1.6h-1zM870.88 363.20h1v1.6h-1zM886.25 363.20h1v1.6h-1zM901.62 363.20h1v1.6h-1zM917.00 363.20h1v1.6h-1zM56.00 378.57h1v1.6h-1zM71.38 378.57h1v1.6h-1zM86.75 378.57h1v1.6h-1zM102.12 378.57h1v1.6h-1zM117.50 378.57h1v1.6h-1zM132.88 378.57h1v1.6h-1zM148.25 378.57h1v1.6h-1zM163.62 378.57h1v1.6h-1zM179.00 378.57h1v1.6h-1zM194.38 378.57h1v1.6h-1zM209.75 378.57h1v1.6h-1zM225.12 378.57h1v1.6h-1zM240.50 378.57h1v1.6h-1zM255.88 378.57h1v1.6h-1zM271.25 378.57h1v1.6h-1zM286.62 378.57h1v1.6h-1zM302.00 378.57h1v1.6h-1zM317.38 378.57h1v1.6h-1zM332.75 378.57h1v1.6h-1zM348.12 378.57h1v1.6h-1zM363.50 378.57h1v1.6h-1zM378.88 378.57h1v1.6h-1zM394.25 378.57h1v1.6h-1zM409.62 378.57h1v1.6h-1zM425.00 378.57h1v1.6h-1zM440.38 378.57h1v1.6h-1zM455.75 378.57h1v1.6h-1zM471.12 378.57h1v1.6h-1zM486.50 378.57h1v1.6h-1zM501.88 378.57h1v1.6h-1zM517.25 378.57h1v1.6h-1zM532.62 378.57h1v1.6h-1zM548.00 378.57h1v1.6h-1zM563.38 378.57h1v1.6h-1zM578.75 378.57h1v1.6h-1zM594.12 378.57h1v1.6h-1zM609.50 378.57h1v1.6h-1zM624.88 378.57h1v1.6h-1zM640.25 378.57h1v1.6h-1zM655.62 378.57h1v1.6h-1zM671.00 378.57h1v1.6h-1zM686.38 378.57h1v1.6h-1zM701.75 378.57h1v1.6h-1zM717.12 378.57h1v1.6h-1zM732.50 378.57h1v1.6h-1zM747.88 378.57h1v1.6h-1zM763.25 378.57h1v1.6h-1zM778.62 378.57h1v1.6h-1zM794.00 378.57h1v1.6h-1zM809.38 378.57h1v1.6h-1zM824.75 378.57h1v1.6h-1zM840.12 378.57h1v1.6h-1zM855.50 378.57h1v1.6h-1zM870.88 378.57h1v1.6h-1zM886.25 378.57h1v1.6h-1zM901.62 378.57h1v1.6h-1zM917.00 378.57h1v1.6h-1zM56.00 393.95h1v1.6h-1zM71.38 393.95h1v1.6h-1zM86.75 393.95h1v1.6h-1zM102.12 393.95h1v1.6h-1zM117.50 393.95h1v1.6h-1zM132.88 393.95h1v1.6h-1zM148.25 393.95h1v1.6h-1zM163.62 393.95h1v1.6h-1zM179.00 393.95h1v1.6h-1zM194.38 393.95h1v1.6h-1zM209.75 393.95h1v1.6h-1zM225.12 393.95h1v1.6h-1zM240.50 393.95h1v1.6h-1zM255.88 393.95h1v1.6h-1zM271.25 393.95h1v1.6h-1zM286.62 393.95h1v1.6h-1zM302.00 393.95h1v1.6h-1zM317.38 393.95h1v1.6h-1zM332.75 393.95h1v1.6h-1zM348.12 393.95h1v1.6h-1zM363.50 393.95h1v1.6h-1zM378.88 393.95h1v1.6h-1zM394.25 393.95h1v1.6h-1zM409.62 393.95h1v1.6h-1zM425.00 393.95h1v1.6h-1zM440.38 393.95h1v1.6h-1zM455.75 393.95h1v1.6h-1zM471.12 393.95h1v1.6h-1zM486.50 393.95h1v1.6h-1zM501.88 393.95h1v1.6h-1zM517.25 393.95h1v1.6h-1zM532.62 393.95h1v1.6h-1zM548.00 393.95h1v1.6h-1zM563.38 393.95h1v1.6h-1zM578.75 393.95h1v1.6h-1zM594.12 393.95h1v1.6h-1zM609.50 393.95h1v1.6h-1zM624.88 393.95h1v1.6h-1zM640.25 393.95h1v1.6h-1zM655.62 393.95h1v1.6h-1zM671.00 393.95h1v1.6h-1zM686.38 393.95h1v1.6h-1zM701.75 393.95h1v1.6h-1zM717.12 393.95h1v1.6h-1zM732.50 393.95h1v1.6h-1zM747.88 393.95h1v1.6h-1zM763.25 393.95h1v1.6h-1zM778.62 393.95h1v1.6h-1zM794.00 393.95h1v1.6h-1zM809.38 393.95h1v1.6h-1zM824.75 393.95h1v1.6h-1zM840.12 393.95h1v1.6h-1zM855.50 393.95h1v1.6h-1zM870.88 393.95h1v1.6h-1zM886.25 393.95h1v1.6h-1zM901.62 393.95h1v1.6h-1zM917.00 393.95h1v1.6h-1zM56.00 409.32h1v1.6h-1zM71.38 409.32h1v1.6h-1zM86.75 409.32h1v1.6h-1zM102.12 409.32h1v1.6h-1zM117.50 409.32h1v1.6h-1zM132.88 409.32h1v1.6h-1zM148.25 409.32h1v1.6h-1zM163.62 409.32h1v1.6h-1zM179.00 409.32h1v1.6h-1zM194.38 409.32h1v1.6h-1zM209.75 409.32h1v1.6h-1zM225.12 409.32h1v1.6h-1zM240.50 409.32h1v1.6h-1zM255.88 409.32h1v1.6h-1zM271.25 409.32h1v1.6h-1zM286.62 409.32h1v1.6h-1zM302.00 409.32h1v1.6h-1zM317.38 409.32h1v1.6h-1zM332.75 409.32h1v1.6h-1zM348.12 409.32h1v1.6h-1zM363.50 409.32h1v1.6h-1zM378.88 409.32h1v1.6h-1zM394.25 409.32h1v1.6h-1zM409.62 409.32h1v1.6h-1zM425.00 409.32h1v1.6h-1zM440.38 409.32h1v1.6h-1zM455.75 409.32h1v1.6h-1zM471.12 409.32h1v1.6h-1zM486.50 409.32h1v1.6h-1zM501.88 409.32h1v1.6h-1zM517.25 409.32h1v1.6h-1zM532.62 409.32h1v1.6h-1zM548.00 409.32h1v1.6h-1zM563.38 409.32h1v1.6h-1zM578.75 409.32h1v1.6h-1zM594.12 409.32h1v1.6h-1zM609.50 409.32h1v1.6h-1zM624.88 409.32h1v1.6h-1zM640.25 409.32h1v1.6h-1zM655.62 409.32h1v1.6h-1zM671.00 409.32h1v1.6h-1zM686.38 409.32h1v1.6h-1zM701.75 409.32h1v1.6h-1zM717.12 409.32h1v1.6h-1zM732.50 409.32h1v1.6h-1zM747.88 409.32h1v1.6h-1zM763.25 409.32h1v1.6h-1zM778.62 409.32h1v1.6h-1zM794.00 409.32h1v1.6h-1zM809.38 409.32h1v1.6h-1zM824.75 409.32h1v1.6h-1zM840.12 409.32h1v1.6h-1zM855.50 409.32h1v1.6h-1zM870.88 409.32h1v1.6h-1zM886.25 409.32h1v1.6h-1zM901.62 409.32h1v1.6h-1zM917.00 409.32h1v1.6h-1zM56.00 424.70h1v1.6h-1zM71.38 424.70h1v1.6h-1zM86.75 424.70h1v1.6h-1zM102.12 424.70h1v1.6h-1zM117.50 424.70h1v1.6h-1zM132.88 424.70h1v1.6h-1zM148.25 424.70h1v1.6h-1zM163.62 424.70h1v1.6h-1zM179.00 424.70h1v1.6h-1zM194.38 424.70h1v1.6h-1zM209.75 424.70h1v1.6h-1zM225.12 424.70h1v1.6h-1zM240.50 424.70h1v1.6h-1zM255.88 424.70h1v1.6h-1zM271.25 424.70h1v1.6h-1zM286.62 424.70h1v1.6h-1zM302.00 424.70h1v1.6h-1zM317.38 424.70h1v1.6h-1zM332.75 424.70h1v1.6h-1zM348.12 424.70h1v1.6h-1zM363.50 424.70h1v1.6h-1zM378.88 424.70h1v1.6h-1zM394.25 424.70h1v1.6h-1zM409.62 424.70h1v1.6h-1zM425.00 424.70h1v1.6h-1zM440.38 424.70h1v1.6h-1zM455.75 424.70h1v1.6h-1zM471.12 424.70h1v1.6h-1zM486.50 424.70h1v1.6h-1zM501.88 424.70h1v1.6h-1zM517.25 424.70h1v1.6h-1zM532.62 424.70h1v1.6h-1zM548.00 424.70h1v1.6h-1zM563.38 424.70h1v1.6h-1zM578.75 424.70h1v1.6h-1zM594.12 424.70h1v1.6h-1zM609.50 424.70h1v1.6h-1zM624.88 424.70h1v1.6h-1zM640.25 424.70h1v1.6h-1zM655.62 424.70h1v1.6h-1zM671.00 424.70h1v1.6h-1zM686.38 424.70h1v1.6h-1zM701.75 424.70h1v1.6h-1zM717.12 424.70h1v1.6h-1zM732.50 424.70h1v1.6h-1zM747.88 424.70h1v1.6h-1zM763.25 424.70h1v1.6h-1zM778.62 424.70h1v1.6h-1zM794.00 424.70h1v1.6h-1zM809.38 424.70h1v1.6h-1zM824.75 424.70h1v1.6h-1zM840.12 424.70h1v1.6h-1zM855.50 424.70h1v1.6h-1zM870.88 424.70h1v1.6h-1zM886.25 424.70h1v1.6h-1zM901.62 424.70h1v1.6h-1zM917.00 424.70h1v1.6h-1zM56.00 440.07h1v1.6h-1zM71.38 440.07h1v1.6h-1zM86.75 440.07h1v1.6h-1zM102.12 440.07h1v1.6h-1zM117.50 440.07h1v1.6h-1zM132.88 440.07h1v1.6h-1zM148.25 440.07h1v1.6h-1zM163.62 440.07h1v1.6h-1zM179.00 440.07h1v1.6h-1zM194.38 440.07h1v1.6h-1zM209.75 440.07h1v1.6h-1zM225.12 440.07h1v1.6h-1zM240.50 440.07h1v1.6h-1zM255.88 440.07h1v1.6h-1zM271.25 440.07h1v1.6h-1zM286.62 440.07h1v1.6h-1zM302.00 440.07h1v1.6h-1zM317.38 440.07h1v1.6h-1zM332.75 440.07h1v1.6h-1zM348.12 440.07h1v1.6h-1zM363.50 440.07h1v1.6h-1zM378.88 440.07h1v1.6h-1zM394.25 440.07h1v1.6h-1zM409.62 440.07h1v1.6h-1zM425.00 440.07h1v1.6h-1zM440.38 440.07h1v1.6h-1zM455.75 440.07h1v1.6h-1zM471.12 440.07h1v1.6h-1zM486.50 440.07h1v1.6h-1zM501.88 440.07h1v1.6h-1zM517.25 440.07h1v1.6h-1zM532.62 440.07h1v1.6h-1zM548.00 440.07h1v1.6h-1zM563.38 440.07h1v1.6h-1zM578.75 440.07h1v1.6h-1zM594.12 440.07h1v1.6h-1zM609.50 440.07h1v1.6h-1zM624.88 440.07h1v1.6h-1zM640.25 440.07h1v1.6h-1zM655.62 440.07h1v1.6h-1zM671.00 440.07h1v1.6h-1zM686.38 440.07h1v1.6h-1zM701.75 440.07h1v1.6h-1zM717.12 440.07h1v1.6h-1zM732.50 440.07h1v1.6h-1zM747.88 440.07h1v1.6h-1zM763.25 440.07h1v1.6h-1zM778.62 440.07h1v1.6h-1zM794.00 440.07h1v1.6h-1zM809.38 440.07h1v1.6h-1zM824.75 440.07h1v1.6h-1zM840.12 440.07h1v1.6h-1zM855.50 440.07h1v1.6h-1zM870.88 440.07h1v1.6h-1zM886.25 440.07h1v1.6h-1zM901.62 440.07h1v1.6h-1zM917.00 440.07h1v1.6h-1zM56.00 455.45h1v1.6h-1zM71.38 455.45h1v1.6h-1zM86.75 455.45h1v1.6h-1zM102.12 455.45h1v1.6h-1zM117.50 455.45h1v1.6h-1zM132.88 455.45h1v1.6h-1zM148.25 455.45h1v1.6h-1zM163.62 455.45h1v1.6h-1zM179.00 455.45h1v1.6h-1zM194.38 455.45h1v1.6h-1zM209.75 455.45h1v1.6h-1zM225.12 455.45h1v1.6h-1zM240.50 455.45h1v1.6h-1zM255.88 455.45h1v1.6h-1zM271.25 455.45h1v1.6h-1zM286.62 455.45h1v1.6h-1zM302.00 455.45h1v1.6h-1zM317.38 455.45h1v1.6h-1zM332.75 455.45h1v1.6h-1zM348.12 455.45h1v1.6h-1zM363.50 455.45h1v1.6h-1zM378.88 455.45h1v1.6h-1zM394.25 455.45h1v1.6h-1zM409.62 455.45h1v1.6h-1zM425.00 455.45h1v1.6h-1zM440.38 455.45h1v1.6h-1zM455.75 455.45h1v1.6h-1zM471.12 455.45h1v1.6h-1zM486.50 455.45h1v1.6h-1zM501.88 455.45h1v1.6h-1zM517.25 455.45h1v1.6h-1zM532.62 455.45h1v1.6h-1zM548.00 455.45h1v1.6h-1zM563.38 455.45h1v1.6h-1zM578.75 455.45h1v1.6h-1zM594.12 455.45h1v1.6h-1zM609.50 455.45h1v1.6h-1zM624.88 455.45h1v1.6h-1zM640.25 455.45h1v1.6h-1zM655.62 455.45h1v1.6h-1zM671.00 455.45h1v1.6h-1zM686.38 455.45h1v1.6h-1zM701.75 455.45h1v1.6h-1zM717.12 455.45h1v1.6h-1zM732.50 455.45h1v1.6h-1zM747.88 455.45h1v1.6h-1zM763.25 455.45h1v1.6h-1zM778.62 455.45h1v1.6h-1zM794.00 455.45h1v1.6h-1zM809.38 455.45h1v1.6h-1zM824.75 455.45h1v1.6h-1zM840.12 455.45h1v1.6h-1zM855.50 455.45h1v1.6h-1zM870.88 455.45h1v1.6h-1zM886.25 455.45h1v1.6h-1zM901.62 455.45h1v1.6h-1zM917.00 455.45h1v1.6h-1zM56.00 470.82h1v1.6h-1zM71.38 470.82h1v1.6h-1zM86.75 470.82h1v1.6h-1zM102.12 470.82h1v1.6h-1zM117.50 470.82h1v1.6h-1zM132.88 470.82h1v1.6h-1zM148.25 470.82h1v1.6h-1zM163.62 470.82h1v1.6h-1zM179.00 470.82h1v1.6h-1zM194.38 470.82h1v1.6h-1zM209.75 470.82h1v1.6h-1zM225.12 470.82h1v1.6h-1zM240.50 470.82h1v1.6h-1zM255.88 470.82h1v1.6h-1zM271.25 470.82h1v1.6h-1zM286.62 470.82h1v1.6h-1zM302.00 470.82h1v1.6h-1zM317.38 470.82h1v1.6h-1zM332.75 470.82h1v1.6h-1zM348.12 470.82h1v1.6h-1zM363.50 470.82h1v1.6h-1zM378.88 470.82h1v1.6h-1zM394.25 470.82h1v1.6h-1zM409.62 470.82h1v1.6h-1zM425.00 470.82h1v1.6h-1zM440.38 470.82h1v1.6h-1zM455.75 470.82h1v1.6h-1zM471.12 470.82h1v1.6h-1zM486.50 470.82h1v1.6h-1zM501.88 470.82h1v1.6h-1zM517.25 470.82h1v1.6h-1zM532.62 470.82h1v1.6h-1zM548.00 470.82h1v1.6h-1zM563.38 470.82h1v1.6h-1zM578.75 470.82h1v1.6h-1zM594.12 470.82h1v1.6h-1zM609.50 470.82h1v1.6h-1zM624.88 470.82h1v1.6h-1zM640.25 470.82h1v1.6h-1zM655.62 470.82h1v1.6h-1zM671.00 470.82h1v1.6h-1zM686.38 470.82h1v1.6h-1zM701.75 470.82h1v1.6h-1zM717.12 470.82h1v1.6h-1zM732.50 470.82h1v1.6h-1zM747.88 470.82h1v1.6h-1zM763.25 470.82h1v1.6h-1zM778.62 470.82h1v1.6h-1zM794.00 470.82h1v1.6h-1zM809.38 470.82h1v1.6h-1zM824.75 470.82h1v1.6h-1zM840.12 470.82h1v1.6h-1zM855.50 470.82h1v1.6h-1zM870.88 470.82h1v1.6h-1zM886.25 470.82h1v1.6h-1zM901.62 470.82h1v1.6h-1zM917.00 470.82h1v1.6h-1zM56.00 486.20h1v1.6h-1zM71.38 486.20h1v1.6h-1zM86.75 486.20h1v1.6h-1zM102.12 486.20h1v1.6h-1zM117.50 486.20h1v1.6h-1zM132.88 486.20h1v1.6h-1zM148.25 486.20h1v1.6h-1zM163.62 486.20h1v1.6h-1zM179.00 486.20h1v1.6h-1zM194.38 486.20h1v1.6h-1zM209.75 486.20h1v1.6h-1zM225.12 486.20h1v1.6h-1zM240.50 486.20h1v1.6h-1zM255.88 486.20h1v1.6h-1zM271.25 486.20h1v1.6h-1zM286.62 486.20h1v1.6h-1zM302.00 486.20h1v1.6h-1zM317.38 486.20h1v1.6h-1zM332.75 486.20h1v1.6h-1zM348.12 486.20h1v1.6h-1zM363.50 486.20h1v1.6h-1zM378.88 486.20h1v1.6h-1zM394.25 486.20h1v1.6h-1zM409.62 486.20h1v1.6h-1zM425.00 486.20h1v1.6h-1zM440.38 486.20h1v1.6h-1zM455.75 486.20h1v1.6h-1zM471.12 486.20h1v1.6h-1zM486.50 486.20h1v1.6h-1zM501.88 486.20h1v1.6h-1zM517.25 486.20h1v1.6h-1zM532.62 486.20h1v1.6h-1zM548.00 486.20h1v1.6h-1zM563.38 486.20h1v1.6h-1zM578.75 486.20h1v1.6h-1zM594.12 486.20h1v1.6h-1zM609.50 486.20h1v1.6h-1zM624.88 486.20h1v1.6h-1zM640.25 486.20h1v1.6h-1zM655.62 486.20h1v1.6h-1zM671.00 486.20h1v1.6h-1zM686.38 486.20h1v1.6h-1zM701.75 486.20h1v1.6h-1zM717.12 486.20h1v1.6h-1zM732.50 486.20h1v1.6h-1zM747.88 486.20h1v1.6h-1zM763.25 486.20h1v1.6h-1zM778.62 486.20h1v1.6h-1zM794.00 486.20h1v1.6h-1zM809.38 486.20h1v1.6h-1zM824.75 486.20h1v1.6h-1zM840.12 486.20h1v1.6h-1zM855.50 486.20h1v1.6h-1zM870.88 486.20h1v1.6h-1zM886.25 486.20h1v1.6h-1zM901.62 486.20h1v1.6h-1zM917.00 486.20h1v1.6h-1zM56.00 501.57h1v1.6h-1zM71.38 501.57h1v1.6h-1zM86.75 501.57h1v1.6h-1zM102.12 501.57h1v1.6h-1zM117.50 501.57h1v1.6h-1zM132.88 501.57h1v1.6h-1zM148.25 501.57h1v1.6h-1zM163.62 501.57h1v1.6h-1zM179.00 501.57h1v1.6h-1zM194.38 501.57h1v1.6h-1zM209.75 501.57h1v1.6h-1zM225.12 501.57h1v1.6h-1zM240.50 501.57h1v1.6h-1zM255.88 501.57h1v1.6h-1zM271.25 501.57h1v1.6h-1zM286.62 501.57h1v1.6h-1zM302.00 501.57h1v1.6h-1zM317.38 501.57h1v1.6h-1zM332.75 501.57h1v1.6h-1zM348.12 501.57h1v1.6h-1zM363.50 501.57h1v1.6h-1zM378.88 501.57h1v1.6h-1zM394.25 501.57h1v1.6h-1zM409.62 501.57h1v1.6h-1zM425.00 501.57h1v1.6h-1zM440.38 501.57h1v1.6h-1zM455.75 501.57h1v1.6h-1zM471.12 501.57h1v1.6h-1zM486.50 501.57h1v1.6h-1zM501.88 501.57h1v1.6h-1zM517.25 501.57h1v1.6h-1zM532.62 501.57h1v1.6h-1zM548.00 501.57h1v1.6h-1zM563.38 501.57h1v1.6h-1zM578.75 501.57h1v1.6h-1zM594.12 501.57h1v1.6h-1zM609.50 501.57h1v1.6h-1zM624.88 501.57h1v1.6h-1zM640.25 501.57h1v1.6h-1zM655.62 501.57h1v1.6h-1zM671.00 501.57h1v1.6h-1zM686.38 501.57h1v1.6h-1zM701.75 501.57h1v1.6h-1zM717.12 501.57h1v1.6h-1zM732.50 501.57h1v1.6h-1zM747.88 501.57h1v1.6h-1zM763.25 501.57h1v1.6h-1zM778.62 501.57h1v1.6h-1zM794.00 501.57h1v1.6h-1zM809.38 501.57h1v1.6h-1zM824.75 501.57h1v1.6h-1zM840.12 501.57h1v1.6h-1zM855.50 501.57h1v1.6h-1zM870.88 501.57h1v1.6h-1zM886.25 501.57h1v1.6h-1zM901.62 501.57h1v1.6h-1zM917.00 501.57h1v1.6h-1zM56.00 516.95h1v1.6h-1zM71.38 516.95h1v1.6h-1zM86.75 516.95h1v1.6h-1zM102.12 516.95h1v1.6h-1zM117.50 516.95h1v1.6h-1zM132.88 516.95h1v1.6h-1zM148.25 516.95h1v1.6h-1zM163.62 516.95h1v1.6h-1zM179.00 516.95h1v1.6h-1zM194.38 516.95h1v1.6h-1zM209.75 516.95h1v1.6h-1zM225.12 516.95h1v1.6h-1zM240.50 516.95h1v1.6h-1zM255.88 516.95h1v1.6h-1zM271.25 516.95h1v1.6h-1zM286.62 516.95h1v1.6h-1zM302.00 516.95h1v1.6h-1zM317.38 516.95h1v1.6h-1zM332.75 516.95h1v1.6h-1zM348.12 516.95h1v1.6h-1zM363.50 516.95h1v1.6h-1zM378.88 516.95h1v1.6h-1zM394.25 516.95h1v1.6h-1zM409.62 516.95h1v1.6h-1zM425.00 516.95h1v1.6h-1zM440.38 516.95h1v1.6h-1zM455.75 516.95h1v1.6h-1zM471.12 516.95h1v1.6h-1zM486.50 516.95h1v1.6h-1zM501.88 516.95h1v1.6h-1zM517.25 516.95h1v1.6h-1zM532.62 516.95h1v1.6h-1zM548.00 516.95h1v1.6h-1zM563.38 516.95h1v1.6h-1zM578.75 516.95h1v1.6h-1zM594.12 516.95h1v1.6h-1zM609.50 516.95h1v1.6h-1zM624.88 516.95h1v1.6h-1zM640.25 516.95h1v1.6h-1zM655.62 516.95h1v1.6h-1zM671.00 516.95h1v1.6h-1zM686.38 516.95h1v1.6h-1zM701.75 516.95h1v1.6h-1zM717.12 516.95h1v1.6h-1zM732.50 516.95h1v1.6h-1zM747.88 516.95h1v1.6h-1zM763.25 516.95h1v1.6h-1zM778.62 516.95h1v1.6h-1zM794.00 516.95h1v1.6h-1zM809.38 516.95h1v1.6h-1zM824.75 516.95h1v1.6h-1zM840.12 516.95h1v1.6h-1zM855.50 516.95h1v1.6h-1zM870.88 516.95h1v1.6h-1zM886.25 516.95h1v1.6h-1zM901.62 516.95h1v1.6h-1zM917.00 516.95h1v1.6h-1zM56.00 532.33h1v1.6h-1zM71.38 532.33h1v1.6h-1zM86.75 532.33h1v1.6h-1zM102.12 532.33h1v1.6h-1zM117.50 532.33h1v1.6h-1zM132.88 532.33h1v1.6h-1zM148.25 532.33h1v1.6h-1zM163.62 532.33h1v1.6h-1zM179.00 532.33h1v1.6h-1zM194.38 532.33h1v1.6h-1zM209.75 532.33h1v1.6h-1zM225.12 532.33h1v1.6h-1zM240.50 532.33h1v1.6h-1zM255.88 532.33h1v1.6h-1zM271.25 532.33h1v1.6h-1zM286.62 532.33h1v1.6h-1zM302.00 532.33h1v1.6h-1zM317.38 532.33h1v1.6h-1zM332.75 532.33h1v1.6h-1zM348.12 532.33h1v1.6h-1zM363.50 532.33h1v1.6h-1zM378.88 532.33h1v1.6h-1zM394.25 532.33h1v1.6h-1zM409.62 532.33h1v1.6h-1zM425.00 532.33h1v1.6h-1zM440.38 532.33h1v1.6h-1zM455.75 532.33h1v1.6h-1zM471.12 532.33h1v1.6h-1zM486.50 532.33h1v1.6h-1zM501.88 532.33h1v1.6h-1zM517.25 532.33h1v1.6h-1zM532.62 532.33h1v1.6h-1zM548.00 532.33h1v1.6h-1zM563.38 532.33h1v1.6h-1zM578.75 532.33h1v1.6h-1zM594.12 532.33h1v1.6h-1zM609.50 532.33h1v1.6h-1zM624.88 532.33h1v1.6h-1zM640.25 532.33h1v1.6h-1zM655.62 532.33h1v1.6h-1zM671.00 532.33h1v1.6h-1zM686.38 532.33h1v1.6h-1zM701.75 532.33h1v1.6h-1zM717.12 532.33h1v1.6h-1zM732.50 532.33h1v1.6h-1zM747.88 532.33h1v1.6h-1zM763.25 532.33h1v1.6h-1zM778.62 532.33h1v1.6h-1zM794.00 532.33h1v1.6h-1zM809.38 532.33h1v1.6h-1zM824.75 532.33h1v1.6h-1zM840.12 532.33h1v1.6h-1zM855.50 532.33h1v1.6h-1zM870.88 532.33h1v1.6h-1zM886.25 532.33h1v1.6h-1zM901.62 532.33h1v1.6h-1zM917.00 532.33h1v1.6h-1zM56.00 547.70h1v1.6h-1zM71.38 547.70h1v1.6h-1zM86.75 547.70h1v1.6h-1zM102.12 547.70h1v1.6h-1zM117.50 547.70h1v1.6h-1zM132.88 547.70h1v1.6h-1zM148.25 547.70h1v1.6h-1zM163.62 547.70h1v1.6h-1zM179.00 547.70h1v1.6h-1zM194.38 547.70h1v1.6h-1zM209.75 547.70h1v1.6h-1zM225.12 547.70h1v1.6h-1zM240.50 547.70h1v1.6h-1zM255.88 547.70h1v1.6h-1zM271.25 547.70h1v1.6h-1zM286.62 547.70h1v1.6h-1zM302.00 547.70h1v1.6h-1zM317.38 547.70h1v1.6h-1zM332.75 547.70h1v1.6h-1zM348.12 547.70h1v1.6h-1zM363.50 547.70h1v1.6h-1zM378.88 547.70h1v1.6h-1zM394.25 547.70h1v1.6h-1zM409.62 547.70h1v1.6h-1zM425.00 547.70h1v1.6h-1zM440.38 547.70h1v1.6h-1zM455.75 547.70h1v1.6h-1zM471.12 547.70h1v1.6h-1zM486.50 547.70h1v1.6h-1zM501.88 547.70h1v1.6h-1zM517.25 547.70h1v1.6h-1zM532.62 547.70h1v1.6h-1zM548.00 547.70h1v1.6h-1zM563.38 547.70h1v1.6h-1zM578.75 547.70h1v1.6h-1zM594.12 547.70h1v1.6h-1zM609.50 547.70h1v1.6h-1zM624.88 547.70h1v1.6h-1zM640.25 547.70h1v1.6h-1zM655.62 547.70h1v1.6h-1zM671.00 547.70h1v1.6h-1zM686.38 547.70h1v1.6h-1zM701.75 547.70h1v1.6h-1zM717.12 547.70h1v1.6h-1zM732.50 547.70h1v1.6h-1zM747.88 547.70h1v1.6h-1zM763.25 547.70h1v1.6h-1zM778.62 547.70h1v1.6h-1zM794.00 547.70h1v1.6h-1zM809.38 547.70h1v1.6h-1zM824.75 547.70h1v1.6h-1zM840.12 547.70h1v1.6h-1zM855.50 547.70h1v1.6h-1zM870.88 547.70h1v1.6h-1zM886.25 547.70h1v1.6h-1zM901.62 547.70h1v1.6h-1zM917.00 547.70h1v1.6h-1zM56.00 563.08h1v1.6h-1zM71.38 563.08h1v1.6h-1zM86.75 563.08h1v1.6h-1zM102.12 563.08h1v1.6h-1zM117.50 563.08h1v1.6h-1zM132.88 563.08h1v1.6h-1zM148.25 563.08h1v1.6h-1zM163.62 563.08h1v1.6h-1zM179.00 563.08h1v1.6h-1zM194.38 563.08h1v1.6h-1zM209.75 563.08h1v1.6h-1zM225.12 563.08h1v1.6h-1zM240.50 563.08h1v1.6h-1zM255.88 563.08h1v1.6h-1zM271.25 563.08h1v1.6h-1zM286.62 563.08h1v1.6h-1zM302.00 563.08h1v1.6h-1zM317.38 563.08h1v1.6h-1zM332.75 563.08h1v1.6h-1zM348.12 563.08h1v1.6h-1zM363.50 563.08h1v1.6h-1zM378.88 563.08h1v1.6h-1zM394.25 563.08h1v1.6h-1zM409.62 563.08h1v1.6h-1zM425.00 563.08h1v1.6h-1zM440.38 563.08h1v1.6h-1zM455.75 563.08h1v1.6h-1zM471.12 563.08h1v1.6h-1zM486.50 563.08h1v1.6h-1zM501.88 563.08h1v1.6h-1zM517.25 563.08h1v1.6h-1zM532.62 563.08h1v1.6h-1zM548.00 563.08h1v1.6h-1zM563.38 563.08h1v1.6h-1zM578.75 563.08h1v1.6h-1zM594.12 563.08h1v1.6h-1zM609.50 563.08h1v1.6h-1zM624.88 563.08h1v1.6h-1zM640.25 563.08h1v1.6h-1zM655.62 563.08h1v1.6h-1zM671.00 563.08h1v1.6h-1zM686.38 563.08h1v1.6h-1zM701.75 563.08h1v1.6h-1zM717.12 563.08h1v1.6h-1zM732.50 563.08h1v1.6h-1zM747.88 563.08h1v1.6h-1zM763.25 563.08h1v1.6h-1zM778.62 563.08h1v1.6h-1zM794.00 563.08h1v1.6h-1zM809.38 563.08h1v1.6h-1zM824.75 563.08h1v1.6h-1zM840.12 563.08h1v1.6h-1zM855.50 563.08h1v1.6h-1zM870.88 563.08h1v1.6h-1zM886.25 563.08h1v1.6h-1zM901.62 563.08h1v1.6h-1zM917.00 563.08h1v1.6h-1zM56.00 578.45h1v1.6h-1zM71.38 578.45h1v1.6h-1zM86.75 578.45h1v1.6h-1zM102.12 578.45h1v1.6h-1zM117.50 578.45h1v1.6h-1zM132.88 578.45h1v1.6h-1zM148.25 578.45h1v1.6h-1zM163.62 578.45h1v1.6h-1zM179.00 578.45h1v1.6h-1zM194.38 578.45h1v1.6h-1zM209.75 578.45h1v1.6h-1zM225.12 578.45h1v1.6h-1zM240.50 578.45h1v1.6h-1zM255.88 578.45h1v1.6h-1zM271.25 578.45h1v1.6h-1zM286.62 578.45h1v1.6h-1zM302.00 578.45h1v1.6h-1zM317.38 578.45h1v1.6h-1zM332.75 578.45h1v1.6h-1zM348.12 578.45h1v1.6h-1zM363.50 578.45h1v1.6h-1zM378.88 578.45h1v1.6h-1zM394.25 578.45h1v1.6h-1zM409.62 578.45h1v1.6h-1zM425.00 578.45h1v1.6h-1zM440.38 578.45h1v1.6h-1zM455.75 578.45h1v1.6h-1zM471.12 578.45h1v1.6h-1zM486.50 578.45h1v1.6h-1zM501.88 578.45h1v1.6h-1zM517.25 578.45h1v1.6h-1zM532.62 578.45h1v1.6h-1zM548.00 578.45h1v1.6h-1zM563.38 578.45h1v1.6h-1zM578.75 578.45h1v1.6h-1zM594.12 578.45h1v1.6h-1zM609.50 578.45h1v1.6h-1zM624.88 578.45h1v1.6h-1zM640.25 578.45h1v1.6h-1zM655.62 578.45h1v1.6h-1zM671.00 578.45h1v1.6h-1zM686.38 578.45h1v1.6h-1zM701.75 578.45h1v1.6h-1zM717.12 578.45h1v1.6h-1zM732.50 578.45h1v1.6h-1zM747.88 578.45h1v1.6h-1zM763.25 578.45h1v1.6h-1zM778.62 578.45h1v1.6h-1zM794.00 578.45h1v1.6h-1zM809.38 578.45h1v1.6h-1zM824.75 578.45h1v1.6h-1zM840.12 578.45h1v1.6h-1zM855.50 578.45h1v1.6h-1zM870.88 578.45h1v1.6h-1zM886.25 578.45h1v1.6h-1zM901.62 578.45h1v1.6h-1zM917.00 578.45h1v1.6h-1zM56.00 593.83h1v1.6h-1zM71.38 593.83h1v1.6h-1zM86.75 593.83h1v1.6h-1zM102.12 593.83h1v1.6h-1zM117.50 593.83h1v1.6h-1zM132.88 593.83h1v1.6h-1zM148.25 593.83h1v1.6h-1zM163.62 593.83h1v1.6h-1zM179.00 593.83h1v1.6h-1zM194.38 593.83h1v1.6h-1zM209.75 593.83h1v1.6h-1zM225.12 593.83h1v1.6h-1zM240.50 593.83h1v1.6h-1zM255.88 593.83h1v1.6h-1zM271.25 593.83h1v1.6h-1zM286.62 593.83h1v1.6h-1zM302.00 593.83h1v1.6h-1zM317.38 593.83h1v1.6h-1zM332.75 593.83h1v1.6h-1zM348.12 593.83h1v1.6h-1zM363.50 593.83h1v1.6h-1zM378.88 593.83h1v1.6h-1zM394.25 593.83h1v1.6h-1zM409.62 593.83h1v1.6h-1zM425.00 593.83h1v1.6h-1zM440.38 593.83h1v1.6h-1zM455.75 593.83h1v1.6h-1zM471.12 593.83h1v1.6h-1zM486.50 593.83h1v1.6h-1zM501.88 593.83h1v1.6h-1zM517.25 593.83h1v1.6h-1zM532.62 593.83h1v1.6h-1zM548.00 593.83h1v1.6h-1zM563.38 593.83h1v1.6h-1zM578.75 593.83h1v1.6h-1zM594.12 593.83h1v1.6h-1zM609.50 593.83h1v1.6h-1zM624.88 593.83h1v1.6h-1zM640.25 593.83h1v1.6h-1zM655.62 593.83h1v1.6h-1zM671.00 593.83h1v1.6h-1zM686.38 593.83h1v1.6h-1zM701.75 593.83h1v1.6h-1zM717.12 593.83h1v1.6h-1zM732.50 593.83h1v1.6h-1zM747.88 593.83h1v1.6h-1zM763.25 593.83h1v1.6h-1zM778.62 593.83h1v1.6h-1zM794.00 593.83h1v1.6h-1zM809.38 593.83h1v1.6h-1zM824.75 593.83h1v1.6h-1zM840.12 593.83h1v1.6h-1zM855.50 593.83h1v1.6h-1zM870.88 593.83h1v1.6h-1zM886.25 593.83h1v1.6h-1zM901.62 593.83h1v1.6h-1zM917.00 593.83h1v1.6h-1zM56.00 609.20h1v1.6h-1zM71.38 609.20h1v1.6h-1zM86.75 609.20h1v1.6h-1zM102.12 609.20h1v1.6h-1zM117.50 609.20h1v1.6h-1zM132.88 609.20h1v1.6h-1zM148.25 609.20h1v1.6h-1zM163.62 609.20h1v1.6h-1zM179.00 609.20h1v1.6h-1zM194.38 609.20h1v1.6h-1zM209.75 609.20h1v1.6h-1zM225.12 609.20h1v1.6h-1zM240.50 609.20h1v1.6h-1zM255.88 609.20h1v1.6h-1zM271.25 609.20h1v1.6h-1zM286.62 609.20h1v1.6h-1zM302.00 609.20h1v1.6h-1zM317.38 609.20h1v1.6h-1zM332.75 609.20h1v1.6h-1zM348.12 609.20h1v1.6h-1zM363.50 609.20h1v1.6h-1zM378.88 609.20h1v1.6h-1zM394.25 609.20h1v1.6h-1zM409.62 609.20h1v1.6h-1zM425.00 609.20h1v1.6h-1zM440.38 609.20h1v1.6h-1zM455.75 609.20h1v1.6h-1zM471.12 609.20h1v1.6h-1zM486.50 609.20h1v1.6h-1zM501.88 609.20h1v1.6h-1zM517.25 609.20h1v1.6h-1zM532.62 609.20h1v1.6h-1zM548.00 609.20h1v1.6h-1zM563.38 609.20h1v1.6h-1zM578.75 609.20h1v1.6h-1zM594.12 609.20h1v1.6h-1zM609.50 609.20h1v1.6h-1zM624.88 609.20h1v1.6h-1zM640.25 609.20h1v1.6h-1zM655.62 609.20h1v1.6h-1zM671.00 609.20h1v1.6h-1zM686.38 609.20h1v1.6h-1zM701.75 609.20h1v1.6h-1zM717.12 609.20h1v1.6h-1zM732.50 609.20h1v1.6h-1zM747.88 609.20h1v1.6h-1zM763.25 609.20h1v1.6h-1zM778.62 609.20h1v1.6h-1zM794.00 609.20h1v1.6h-1zM809.38 609.20h1v1.6h-1zM824.75 609.20h1v1.6h-1zM840.12 609.20h1v1.6h-1zM855.50 609.20h1v1.6h-1zM870.88 609.20h1v1.6h-1zM886.25 609.20h1v1.6h-1zM901.62 609.20h1v1.6h-1zM917.00 609.20h1v1.6h-1zM56.00 624.58h1v1.6h-1zM71.38 624.58h1v1.6h-1zM86.75 624.58h1v1.6h-1zM102.12 624.58h1v1.6h-1zM117.50 624.58h1v1.6h-1zM132.88 624.58h1v1.6h-1zM148.25 624.58h1v1.6h-1zM163.62 624.58h1v1.6h-1zM179.00 624.58h1v1.6h-1zM194.38 624.58h1v1.6h-1zM209.75 624.58h1v1.6h-1zM225.12 624.58h1v1.6h-1zM240.50 624.58h1v1.6h-1zM255.88 624.58h1v1.6h-1zM271.25 624.58h1v1.6h-1zM286.62 624.58h1v1.6h-1zM302.00 624.58h1v1.6h-1zM317.38 624.58h1v1.6h-1zM332.75 624.58h1v1.6h-1zM348.12 624.58h1v1.6h-1zM363.50 624.58h1v1.6h-1zM378.88 624.58h1v1.6h-1zM394.25 624.58h1v1.6h-1zM409.62 624.58h1v1.6h-1zM425.00 624.58h1v1.6h-1zM440.38 624.58h1v1.6h-1zM455.75 624.58h1v1.6h-1zM471.12 624.58h1v1.6h-1zM486.50 624.58h1v1.6h-1zM501.88 624.58h1v1.6h-1zM517.25 624.58h1v1.6h-1zM532.62 624.58h1v1.6h-1zM548.00 624.58h1v1.6h-1zM563.38 624.58h1v1.6h-1zM578.75 624.58h1v1.6h-1zM594.12 624.58h1v1.6h-1zM609.50 624.58h1v1.6h-1zM624.88 624.58h1v1.6h-1zM640.25 624.58h1v1.6h-1zM655.62 624.58h1v1.6h-1zM671.00 624.58h1v1.6h-1zM686.38 624.58h1v1.6h-1zM701.75 624.58h1v1.6h-1zM717.12 624.58h1v1.6h-1zM732.50 624.58h1v1.6h-1zM747.88 624.58h1v1.6h-1zM763.25 624.58h1v1.6h-1zM778.62 624.58h1v1.6h-1zM794.00 624.58h1v1.6h-1zM809.38 624.58h1v1.6h-1zM824.75 624.58h1v1.6h-1zM840.12 624.58h1v1.6h-1zM855.50 624.58h1v1.6h-1zM870.88 624.58h1v1.6h-1zM886.25 624.58h1v1.6h-1zM901.62 624.58h1v1.6h-1zM917.00 624.58h1v1.6h-1zM56.00 639.95h1v1.6h-1zM71.38 639.95h1v1.6h-1zM86.75 639.95h1v1.6h-1zM102.12 639.95h1v1.6h-1zM117.50 639.95h1v1.6h-1zM132.88 639.95h1v1.6h-1zM148.25 639.95h1v1.6h-1zM163.62 639.95h1v1.6h-1zM179.00 639.95h1v1.6h-1zM194.38 639.95h1v1.6h-1zM209.75 639.95h1v1.6h-1zM225.12 639.95h1v1.6h-1zM240.50 639.95h1v1.6h-1zM255.88 639.95h1v1.6h-1zM271.25 639.95h1v1.6h-1zM286.62 639.95h1v1.6h-1zM302.00 639.95h1v1.6h-1zM317.38 639.95h1v1.6h-1zM332.75 639.95h1v1.6h-1zM348.12 639.95h1v1.6h-1zM363.50 639.95h1v1.6h-1zM378.88 639.95h1v1.6h-1zM394.25 639.95h1v1.6h-1zM409.62 639.95h1v1.6h-1zM425.00 639.95h1v1.6h-1zM440.38 639.95h1v1.6h-1zM455.75 639.95h1v1.6h-1zM471.12 639.95h1v1.6h-1zM486.50 639.95h1v1.6h-1zM501.88 639.95h1v1.6h-1zM517.25 639.95h1v1.6h-1zM532.62 639.95h1v1.6h-1zM548.00 639.95h1v1.6h-1zM563.38 639.95h1v1.6h-1zM578.75 639.95h1v1.6h-1zM594.12 639.95h1v1.6h-1zM609.50 639.95h1v1.6h-1zM624.88 639.95h1v1.6h-1zM640.25 639.95h1v1.6h-1zM655.62 639.95h1v1.6h-1zM671.00 639.95h1v1.6h-1zM686.38 639.95h1v1.6h-1zM701.75 639.95h1v1.6h-1zM717.12 639.95h1v1.6h-1zM732.50 639.95h1v1.6h-1zM747.88 639.95h1v1.6h-1zM763.25 639.95h1v1.6h-1zM778.62 639.95h1v1.6h-1zM794.00 639.95h1v1.6h-1zM809.38 639.95h1v1.6h-1zM824.75 639.95h1v1.6h-1zM840.12 639.95h1v1.6h-1zM855.50 639.95h1v1.6h-1zM870.88 639.95h1v1.6h-1zM886.25 639.95h1v1.6h-1zM901.62 639.95h1v1.6h-1zM917.00 639.95h1v1.6h-1zM56.00 655.33h1v1.6h-1zM71.38 655.33h1v1.6h-1zM86.75 655.33h1v1.6h-1zM102.12 655.33h1v1.6h-1zM117.50 655.33h1v1.6h-1zM132.88 655.33h1v1.6h-1zM148.25 655.33h1v1.6h-1zM163.62 655.33h1v1.6h-1zM179.00 655.33h1v1.6h-1zM194.38 655.33h1v1.6h-1zM209.75 655.33h1v1.6h-1zM225.12 655.33h1v1.6h-1zM240.50 655.33h1v1.6h-1zM255.88 655.33h1v1.6h-1zM271.25 655.33h1v1.6h-1zM286.62 655.33h1v1.6h-1zM302.00 655.33h1v1.6h-1zM317.38 655.33h1v1.6h-1zM332.75 655.33h1v1.6h-1zM348.12 655.33h1v1.6h-1zM363.50 655.33h1v1.6h-1zM378.88 655.33h1v1.6h-1zM394.25 655.33h1v1.6h-1zM409.62 655.33h1v1.6h-1zM425.00 655.33h1v1.6h-1zM440.38 655.33h1v1.6h-1zM455.75 655.33h1v1.6h-1zM471.12 655.33h1v1.6h-1zM486.50 655.33h1v1.6h-1zM501.88 655.33h1v1.6h-1zM517.25 655.33h1v1.6h-1zM532.62 655.33h1v1.6h-1zM548.00 655.33h1v1.6h-1zM563.38 655.33h1v1.6h-1zM578.75 655.33h1v1.6h-1zM594.12 655.33h1v1.6h-1zM609.50 655.33h1v1.6h-1zM624.88 655.33h1v1.6h-1zM640.25 655.33h1v1.6h-1zM655.62 655.33h1v1.6h-1zM671.00 655.33h1v1.6h-1zM686.38 655.33h1v1.6h-1zM701.75 655.33h1v1.6h-1zM717.12 655.33h1v1.6h-1zM732.50 655.33h1v1.6h-1zM747.88 655.33h1v1.6h-1zM763.25 655.33h1v1.6h-1zM778.62 655.33h1v1.6h-1zM794.00 655.33h1v1.6h-1zM809.38 655.33h1v1.6h-1zM824.75 655.33h1v1.6h-1zM840.12 655.33h1v1.6h-1zM855.50 655.33h1v1.6h-1zM870.88 655.33h1v1.6h-1zM886.25 655.33h1v1.6h-1zM901.62 655.33h1v1.6h-1zM917.00 655.33h1v1.6h-1zM56.00 670.70h1v1.6h-1zM71.38 670.70h1v1.6h-1zM86.75 670.70h1v1.6h-1zM102.12 670.70h1v1.6h-1zM117.50 670.70h1v1.6h-1zM132.88 670.70h1v1.6h-1zM148.25 670.70h1v1.6h-1zM163.62 670.70h1v1.6h-1zM179.00 670.70h1v1.6h-1zM194.38 670.70h1v1.6h-1zM209.75 670.70h1v1.6h-1zM225.12 670.70h1v1.6h-1zM240.50 670.70h1v1.6h-1zM255.88 670.70h1v1.6h-1zM271.25 670.70h1v1.6h-1zM286.62 670.70h1v1.6h-1zM302.00 670.70h1v1.6h-1zM317.38 670.70h1v1.6h-1zM332.75 670.70h1v1.6h-1zM348.12 670.70h1v1.6h-1zM363.50 670.70h1v1.6h-1zM378.88 670.70h1v1.6h-1zM394.25 670.70h1v1.6h-1zM409.62 670.70h1v1.6h-1zM425.00 670.70h1v1.6h-1zM440.38 670.70h1v1.6h-1zM455.75 670.70h1v1.6h-1zM471.12 670.70h1v1.6h-1zM486.50 670.70h1v1.6h-1zM501.88 670.70h1v1.6h-1zM517.25 670.70h1v1.6h-1zM532.62 670.70h1v1.6h-1zM548.00 670.70h1v1.6h-1zM563.38 670.70h1v1.6h-1zM578.75 670.70h1v1.6h-1zM594.12 670.70h1v1.6h-1zM609.50 670.70h1v1.6h-1zM624.88 670.70h1v1.6h-1zM640.25 670.70h1v1.6h-1zM655.62 670.70h1v1.6h-1zM671.00 670.70h1v1.6h-1zM686.38 670.70h1v1.6h-1zM701.75 670.70h1v1.6h-1zM717.12 670.70h1v1.6h-1zM732.50 670.70h1v1.6h-1zM747.88 670.70h1v1.6h-1zM763.25 670.70h1v1.6h-1zM778.62 670.70h1v1.6h-1zM794.00 670.70h1v1.6h-1zM809.38 670.70h1v1.6h-1zM824.75 670.70h1v1.6h-1zM840.12 670.70h1v1.6h-1zM855.50 670.70h1v1.6h-1zM870.88 670.70h1v1.6h-1zM886.25 670.70h1v1.6h-1zM901.62 670.70h1v1.6h-1zM917.00 670.70h1v1.6h-1zM56.00 686.08h1v1.6h-1zM71.38 686.08h1v1.6h-1zM86.75 686.08h1v1.6h-1zM102.12 686.08h1v1.6h-1zM117.50 686.08h1v1.6h-1zM132.88 686.08h1v1.6h-1zM148.25 686.08h1v1.6h-1zM163.62 686.08h1v1.6h-1zM179.00 686.08h1v1.6h-1zM194.38 686.08h1v1.6h-1zM209.75 686.08h1v1.6h-1zM225.12 686.08h1v1.6h-1zM240.50 686.08h1v1.6h-1zM255.88 686.08h1v1.6h-1zM271.25 686.08h1v1.6h-1zM286.62 686.08h1v1.6h-1zM302.00 686.08h1v1.6h-1zM317.38 686.08h1v1.6h-1zM332.75 686.08h1v1.6h-1zM348.12 686.08h1v1.6h-1zM363.50 686.08h1v1.6h-1zM378.88 686.08h1v1.6h-1zM394.25 686.08h1v1.6h-1zM409.62 686.08h1v1.6h-1zM425.00 686.08h1v1.6h-1zM440.38 686.08h1v1.6h-1zM455.75 686.08h1v1.6h-1zM471.12 686.08h1v1.6h-1zM486.50 686.08h1v1.6h-1zM501.88 686.08h1v1.6h-1zM517.25 686.08h1v1.6h-1zM532.62 686.08h1v1.6h-1zM548.00 686.08h1v1.6h-1zM563.38 686.08h1v1.6h-1zM578.75 686.08h1v1.6h-1zM594.12 686.08h1v1.6h-1zM609.50 686.08h1v1.6h-1zM624.88 686.08h1v1.6h-1zM640.25 686.08h1v1.6h-1zM655.62 686.08h1v1.6h-1zM671.00 686.08h1v1.6h-1zM686.38 686.08h1v1.6h-1zM701.75 686.08h1v1.6h-1zM717.12 686.08h1v1.6h-1zM732.50 686.08h1v1.6h-1zM747.88 686.08h1v1.6h-1zM763.25 686.08h1v1.6h-1zM778.62 686.08h1v1.6h-1zM794.00 686.08h1v1.6h-1zM809.38 686.08h1v1.6h-1zM824.75 686.08h1v1.6h-1zM840.12 686.08h1v1.6h-1zM855.50 686.08h1v1.6h-1zM870.88 686.08h1v1.6h-1zM886.25 686.08h1v1.6h-1zM901.62 686.08h1v1.6h-1zM917.00 686.08h1v1.6h-1zM56.00 701.45h1v1.6h-1zM71.38 701.45h1v1.6h-1zM86.75 701.45h1v1.6h-1zM102.12 701.45h1v1.6h-1zM117.50 701.45h1v1.6h-1zM132.88 701.45h1v1.6h-1zM148.25 701.45h1v1.6h-1zM163.62 701.45h1v1.6h-1zM179.00 701.45h1v1.6h-1zM194.38 701.45h1v1.6h-1zM209.75 701.45h1v1.6h-1zM225.12 701.45h1v1.6h-1zM240.50 701.45h1v1.6h-1zM255.88 701.45h1v1.6h-1zM271.25 701.45h1v1.6h-1zM286.62 701.45h1v1.6h-1zM302.00 701.45h1v1.6h-1zM317.38 701.45h1v1.6h-1zM332.75 701.45h1v1.6h-1zM348.12 701.45h1v1.6h-1zM363.50 701.45h1v1.6h-1zM378.88 701.45h1v1.6h-1zM394.25 701.45h1v1.6h-1zM409.62 701.45h1v1.6h-1zM425.00 701.45h1v1.6h-1zM440.38 701.45h1v1.6h-1zM455.75 701.45h1v1.6h-1zM471.12 701.45h1v1.6h-1zM486.50 701.45h1v1.6h-1zM501.88 701.45h1v1.6h-1zM517.25 701.45h1v1.6h-1zM532.62 701.45h1v1.6h-1zM548.00 701.45h1v1.6h-1zM563.38 701.45h1v1.6h-1zM578.75 701.45h1v1.6h-1zM594.12 701.45h1v1.6h-1zM609.50 701.45h1v1.6h-1zM624.88 701.45h1v1.6h-1zM640.25 701.45h1v1.6h-1zM655.62 701.45h1v1.6h-1zM671.00 701.45h1v1.6h-1zM686.38 701.45h1v1.6h-1zM701.75 701.45h1v1.6h-1zM717.12 701.45h1v1.6h-1zM732.50 701.45h1v1.6h-1zM747.88 701.45h1v1.6h-1zM763.25 701.45h1v1.6h-1zM778.62 701.45h1v1.6h-1zM794.00 701.45h1v1.6h-1zM809.38 701.45h1v1.6h-1zM824.75 701.45h1v1.6h-1zM840.12 701.45h1v1.6h-1zM855.50 701.45h1v1.6h-1zM870.88 701.45h1v1.6h-1zM886.25 701.45h1v1.6h-1zM901.62 701.45h1v1.6h-1zM917.00 701.45h1v1.6h-1zM56.00 716.83h1v1.6h-1zM71.38 716.83h1v1.6h-1zM86.75 716.83h1v1.6h-1zM102.12 716.83h1v1.6h-1zM117.50 716.83h1v1.6h-1zM132.88 716.83h1v1.6h-1zM148.25 716.83h1v1.6h-1zM163.62 716.83h1v1.6h-1zM179.00 716.83h1v1.6h-1zM194.38 716.83h1v1.6h-1zM209.75 716.83h1v1.6h-1zM225.12 716.83h1v1.6h-1zM240.50 716.83h1v1.6h-1zM255.88 716.83h1v1.6h-1zM271.25 716.83h1v1.6h-1zM286.62 716.83h1v1.6h-1zM302.00 716.83h1v1.6h-1zM317.38 716.83h1v1.6h-1zM332.75 716.83h1v1.6h-1zM348.12 716.83h1v1.6h-1zM363.50 716.83h1v1.6h-1zM378.88 716.83h1v1.6h-1zM394.25 716.83h1v1.6h-1zM409.62 716.83h1v1.6h-1zM425.00 716.83h1v1.6h-1zM440.38 716.83h1v1.6h-1zM455.75 716.83h1v1.6h-1zM471.12 716.83h1v1.6h-1zM486.50 716.83h1v1.6h-1zM501.88 716.83h1v1.6h-1zM517.25 716.83h1v1.6h-1zM532.62 716.83h1v1.6h-1zM548.00 716.83h1v1.6h-1zM563.38 716.83h1v1.6h-1zM578.75 716.83h1v1.6h-1zM594.12 716.83h1v1.6h-1zM609.50 716.83h1v1.6h-1zM624.88 716.83h1v1.6h-1zM640.25 716.83h1v1.6h-1zM655.62 716.83h1v1.6h-1zM671.00 716.83h1v1.6h-1zM686.38 716.83h1v1.6h-1zM701.75 716.83h1v1.6h-1zM717.12 716.83h1v1.6h-1zM732.50 716.83h1v1.6h-1zM747.88 716.83h1v1.6h-1zM763.25 716.83h1v1.6h-1zM778.62 716.83h1v1.6h-1zM794.00 716.83h1v1.6h-1zM809.38 716.83h1v1.6h-1zM824.75 716.83h1v1.6h-1zM840.12 716.83h1v1.6h-1zM855.50 716.83h1v1.6h-1zM870.88 716.83h1v1.6h-1zM886.25 716.83h1v1.6h-1zM901.62 716.83h1v1.6h-1zM917.00 716.83h1v1.6h-1zM56.00 732.20h1v1.6h-1zM71.38 732.20h1v1.6h-1zM86.75 732.20h1v1.6h-1zM102.12 732.20h1v1.6h-1zM117.50 732.20h1v1.6h-1zM132.88 732.20h1v1.6h-1zM148.25 732.20h1v1.6h-1zM163.62 732.20h1v1.6h-1zM179.00 732.20h1v1.6h-1zM194.38 732.20h1v1.6h-1zM209.75 732.20h1v1.6h-1zM225.12 732.20h1v1.6h-1zM240.50 732.20h1v1.6h-1zM255.88 732.20h1v1.6h-1zM271.25 732.20h1v1.6h-1zM286.62 732.20h1v1.6h-1zM302.00 732.20h1v1.6h-1zM317.38 732.20h1v1.6h-1zM332.75 732.20h1v1.6h-1zM348.12 732.20h1v1.6h-1zM363.50 732.20h1v1.6h-1zM378.88 732.20h1v1.6h-1zM394.25 732.20h1v1.6h-1zM409.62 732.20h1v1.6h-1zM425.00 732.20h1v1.6h-1zM440.38 732.20h1v1.6h-1zM455.75 732.20h1v1.6h-1zM471.12 732.20h1v1.6h-1zM486.50 732.20h1v1.6h-1zM501.88 732.20h1v1.6h-1zM517.25 732.20h1v1.6h-1zM532.62 732.20h1v1.6h-1zM548.00 732.20h1v1.6h-1zM563.38 732.20h1v1.6h-1zM578.75 732.20h1v1.6h-1zM594.12 732.20h1v1.6h-1zM609.50 732.20h1v1.6h-1zM624.88 732.20h1v1.6h-1zM640.25 732.20h1v1.6h-1zM655.62 732.20h1v1.6h-1zM671.00 732.20h1v1.6h-1zM686.38 732.20h1v1.6h-1zM701.75 732.20h1v1.6h-1zM717.12 732.20h1v1.6h-1zM732.50 732.20h1v1.6h-1zM747.88 732.20h1v1.6h-1zM763.25 732.20h1v1.6h-1zM778.62 732.20h1v1.6h-1zM794.00 732.20h1v1.6h-1zM809.38 732.20h1v1.6h-1zM824.75 732.20h1v1.6h-1zM840.12 732.20h1v1.6h-1zM855.50 732.20h1v1.6h-1zM870.88 732.20h1v1.6h-1zM886.25 732.20h1v1.6h-1zM901.62 732.20h1v1.6h-1zM917.00 732.20h1v1.6h-1zM56.00 747.58h1v1.6h-1zM71.38 747.58h1v1.6h-1zM86.75 747.58h1v1.6h-1zM102.12 747.58h1v1.6h-1zM117.50 747.58h1v1.6h-1zM132.88 747.58h1v1.6h-1zM148.25 747.58h1v1.6h-1zM163.62 747.58h1v1.6h-1zM179.00 747.58h1v1.6h-1zM194.38 747.58h1v1.6h-1zM209.75 747.58h1v1.6h-1zM225.12 747.58h1v1.6h-1zM240.50 747.58h1v1.6h-1zM255.88 747.58h1v1.6h-1zM271.25 747.58h1v1.6h-1zM286.62 747.58h1v1.6h-1zM302.00 747.58h1v1.6h-1zM317.38 747.58h1v1.6h-1zM332.75 747.58h1v1.6h-1zM348.12 747.58h1v1.6h-1zM363.50 747.58h1v1.6h-1zM378.88 747.58h1v1.6h-1zM394.25 747.58h1v1.6h-1zM409.62 747.58h1v1.6h-1zM425.00 747.58h1v1.6h-1zM440.38 747.58h1v1.6h-1zM455.75 747.58h1v1.6h-1zM471.12 747.58h1v1.6h-1zM486.50 747.58h1v1.6h-1zM501.88 747.58h1v1.6h-1zM517.25 747.58h1v1.6h-1zM532.62 747.58h1v1.6h-1zM548.00 747.58h1v1.6h-1zM563.38 747.58h1v1.6h-1zM578.75 747.58h1v1.6h-1zM594.12 747.58h1v1.6h-1zM609.50 747.58h1v1.6h-1zM624.88 747.58h1v1.6h-1zM640.25 747.58h1v1.6h-1zM655.62 747.58h1v1.6h-1zM671.00 747.58h1v1.6h-1zM686.38 747.58h1v1.6h-1zM701.75 747.58h1v1.6h-1zM717.12 747.58h1v1.6h-1zM732.50 747.58h1v1.6h-1zM747.88 747.58h1v1.6h-1zM763.25 747.58h1v1.6h-1zM778.62 747.58h1v1.6h-1zM794.00 747.58h1v1.6h-1zM809.38 747.58h1v1.6h-1zM824.75 747.58h1v1.6h-1zM840.12 747.58h1v1.6h-1zM855.50 747.58h1v1.6h-1zM870.88 747.58h1v1.6h-1zM886.25 747.58h1v1.6h-1zM901.62 747.58h1v1.6h-1zM917.00 747.58h1v1.6h-1zM56.00 762.95h1v1.6h-1zM71.38 762.95h1v1.6h-1zM86.75 762.95h1v1.6h-1zM102.12 762.95h1v1.6h-1zM117.50 762.95h1v1.6h-1zM132.88 762.95h1v1.6h-1zM148.25 762.95h1v1.6h-1zM163.62 762.95h1v1.6h-1zM179.00 762.95h1v1.6h-1zM194.38 762.95h1v1.6h-1zM209.75 762.95h1v1.6h-1zM225.12 762.95h1v1.6h-1zM240.50 762.95h1v1.6h-1zM255.88 762.95h1v1.6h-1zM271.25 762.95h1v1.6h-1zM286.62 762.95h1v1.6h-1zM302.00 762.95h1v1.6h-1zM317.38 762.95h1v1.6h-1zM332.75 762.95h1v1.6h-1zM348.12 762.95h1v1.6h-1zM363.50 762.95h1v1.6h-1zM378.88 762.95h1v1.6h-1zM394.25 762.95h1v1.6h-1zM409.62 762.95h1v1.6h-1zM425.00 762.95h1v1.6h-1zM440.38 762.95h1v1.6h-1zM455.75 762.95h1v1.6h-1zM471.12 762.95h1v1.6h-1zM486.50 762.95h1v1.6h-1zM501.88 762.95h1v1.6h-1zM517.25 762.95h1v1.6h-1zM532.62 762.95h1v1.6h-1zM548.00 762.95h1v1.6h-1zM563.38 762.95h1v1.6h-1zM578.75 762.95h1v1.6h-1zM594.12 762.95h1v1.6h-1zM609.50 762.95h1v1.6h-1zM624.88 762.95h1v1.6h-1zM640.25 762.95h1v1.6h-1zM655.62 762.95h1v1.6h-1zM671.00 762.95h1v1.6h-1zM686.38 762.95h1v1.6h-1zM701.75 762.95h1v1.6h-1zM717.12 762.95h1v1.6h-1zM732.50 762.95h1v1.6h-1zM747.88 762.95h1v1.6h-1zM763.25 762.95h1v1.6h-1zM778.62 762.95h1v1.6h-1zM794.00 762.95h1v1.6h-1zM809.38 762.95h1v1.6h-1zM824.75 762.95h1v1.6h-1zM840.12 762.95h1v1.6h-1zM855.50 762.95h1v1.6h-1zM870.88 762.95h1v1.6h-1zM886.25 762.95h1v1.6h-1zM901.62 762.95h1v1.6h-1zM917.00 762.95h1v1.6h-1zM56.00 778.33h1v1.6h-1zM71.38 778.33h1v1.6h-1zM86.75 778.33h1v1.6h-1zM102.12 778.33h1v1.6h-1zM117.50 778.33h1v1.6h-1zM132.88 778.33h1v1.6h-1zM148.25 778.33h1v1.6h-1zM163.62 778.33h1v1.6h-1zM179.00 778.33h1v1.6h-1zM194.38 778.33h1v1.6h-1zM209.75 778.33h1v1.6h-1zM225.12 778.33h1v1.6h-1zM240.50 778.33h1v1.6h-1zM255.88 778.33h1v1.6h-1zM271.25 778.33h1v1.6h-1zM286.62 778.33h1v1.6h-1zM302.00 778.33h1v1.6h-1zM317.38 778.33h1v1.6h-1zM332.75 778.33h1v1.6h-1zM348.12 778.33h1v1.6h-1zM363.50 778.33h1v1.6h-1zM378.88 778.33h1v1.6h-1zM394.25 778.33h1v1.6h-1zM409.62 778.33h1v1.6h-1zM425.00 778.33h1v1.6h-1zM440.38 778.33h1v1.6h-1zM455.75 778.33h1v1.6h-1zM471.12 778.33h1v1.6h-1zM486.50 778.33h1v1.6h-1zM501.88 778.33h1v1.6h-1zM517.25 778.33h1v1.6h-1zM532.62 778.33h1v1.6h-1zM548.00 778.33h1v1.6h-1zM563.38 778.33h1v1.6h-1zM578.75 778.33h1v1.6h-1zM594.12 778.33h1v1.6h-1zM609.50 778.33h1v1.6h-1zM624.88 778.33h1v1.6h-1zM640.25 778.33h1v1.6h-1zM655.62 778.33h1v1.6h-1zM671.00 778.33h1v1.6h-1zM686.38 778.33h1v1.6h-1zM701.75 778.33h1v1.6h-1zM717.12 778.33h1v1.6h-1zM732.50 778.33h1v1.6h-1zM747.88 778.33h1v1.6h-1zM763.25 778.33h1v1.6h-1zM778.62 778.33h1v1.6h-1zM794.00 778.33h1v1.6h-1zM809.38 778.33h1v1.6h-1zM824.75 778.33h1v1.6h-1zM840.12 778.33h1v1.6h-1zM855.50 778.33h1v1.6h-1zM870.88 778.33h1v1.6h-1zM886.25 778.33h1v1.6h-1zM901.62 778.33h1v1.6h-1zM917.00 778.33h1v1.6h-1zM56.00 793.70h1v1.6h-1zM71.38 793.70h1v1.6h-1zM86.75 793.70h1v1.6h-1zM102.12 793.70h1v1.6h-1zM117.50 793.70h1v1.6h-1zM132.88 793.70h1v1.6h-1zM148.25 793.70h1v1.6h-1zM163.62 793.70h1v1.6h-1zM179.00 793.70h1v1.6h-1zM194.38 793.70h1v1.6h-1zM209.75 793.70h1v1.6h-1zM225.12 793.70h1v1.6h-1zM240.50 793.70h1v1.6h-1zM255.88 793.70h1v1.6h-1zM271.25 793.70h1v1.6h-1zM286.62 793.70h1v1.6h-1zM302.00 793.70h1v1.6h-1zM317.38 793.70h1v1.6h-1zM332.75 793.70h1v1.6h-1zM348.12 793.70h1v1.6h-1zM363.50 793.70h1v1.6h-1zM378.88 793.70h1v1.6h-1zM394.25 793.70h1v1.6h-1zM409.62 793.70h1v1.6h-1zM425.00 793.70h1v1.6h-1zM440.38 793.70h1v1.6h-1zM455.75 793.70h1v1.6h-1zM471.12 793.70h1v1.6h-1zM486.50 793.70h1v1.6h-1zM501.88 793.70h1v1.6h-1zM517.25 793.70h1v1.6h-1zM532.62 793.70h1v1.6h-1zM548.00 793.70h1v1.6h-1zM563.38 793.70h1v1.6h-1zM578.75 793.70h1v1.6h-1zM594.12 793.70h1v1.6h-1zM609.50 793.70h1v1.6h-1zM624.88 793.70h1v1.6h-1zM640.25 793.70h1v1.6h-1zM655.62 793.70h1v1.6h-1zM671.00 793.70h1v1.6h-1zM686.38 793.70h1v1.6h-1zM701.75 793.70h1v1.6h-1zM717.12 793.70h1v1.6h-1zM732.50 793.70h1v1.6h-1zM747.88 793.70h1v1.6h-1zM763.25 793.70h1v1.6h-1zM778.62 793.70h1v1.6h-1zM794.00 793.70h1v1.6h-1zM809.38 793.70h1v1.6h-1zM824.75 793.70h1v1.6h-1zM840.12 793.70h1v1.6h-1zM855.50 793.70h1v1.6h-1zM870.88 793.70h1v1.6h-1zM886.25 793.70h1v1.6h-1zM901.62 793.70h1v1.6h-1zM917.00 793.70h1v1.6h-1zM56.00 809.08h1v1.6h-1zM71.38 809.08h1v1.6h-1zM86.75 809.08h1v1.6h-1zM102.12 809.08h1v1.6h-1zM117.50 809.08h1v1.6h-1zM132.88 809.08h1v1.6h-1zM148.25 809.08h1v1.6h-1zM163.62 809.08h1v1.6h-1zM179.00 809.08h1v1.6h-1zM194.38 809.08h1v1.6h-1zM209.75 809.08h1v1.6h-1zM225.12 809.08h1v1.6h-1zM240.50 809.08h1v1.6h-1zM255.88 809.08h1v1.6h-1zM271.25 809.08h1v1.6h-1zM286.62 809.08h1v1.6h-1zM302.00 809.08h1v1.6h-1zM317.38 809.08h1v1.6h-1zM332.75 809.08h1v1.6h-1zM348.12 809.08h1v1.6h-1zM363.50 809.08h1v1.6h-1zM378.88 809.08h1v1.6h-1zM394.25 809.08h1v1.6h-1zM409.62 809.08h1v1.6h-1zM425.00 809.08h1v1.6h-1zM440.38 809.08h1v1.6h-1zM455.75 809.08h1v1.6h-1zM471.12 809.08h1v1.6h-1zM486.50 809.08h1v1.6h-1zM501.88 809.08h1v1.6h-1zM517.25 809.08h1v1.6h-1zM532.62 809.08h1v1.6h-1zM548.00 809.08h1v1.6h-1zM563.38 809.08h1v1.6h-1zM578.75 809.08h1v1.6h-1zM594.12 809.08h1v1.6h-1zM609.50 809.08h1v1.6h-1zM624.88 809.08h1v1.6h-1zM640.25 809.08h1v1.6h-1zM655.62 809.08h1v1.6h-1zM671.00 809.08h1v1.6h-1zM686.38 809.08h1v1.6h-1zM701.75 809.08h1v1.6h-1zM717.12 809.08h1v1.6h-1zM732.50 809.08h1v1.6h-1zM747.88 809.08h1v1.6h-1zM763.25 809.08h1v1.6h-1zM778.62 809.08h1v1.6h-1zM794.00 809.08h1v1.6h-1zM809.38 809.08h1v1.6h-1zM824.75 809.08h1v1.6h-1zM840.12 809.08h1v1.6h-1zM855.50 809.08h1v1.6h-1zM870.88 809.08h1v1.6h-1zM886.25 809.08h1v1.6h-1zM901.62 809.08h1v1.6h-1zM917.00 809.08h1v1.6h-1zM56.00 824.45h1v1.6h-1zM71.38 824.45h1v1.6h-1zM86.75 824.45h1v1.6h-1zM102.12 824.45h1v1.6h-1zM117.50 824.45h1v1.6h-1zM132.88 824.45h1v1.6h-1zM148.25 824.45h1v1.6h-1zM163.62 824.45h1v1.6h-1zM179.00 824.45h1v1.6h-1zM194.38 824.45h1v1.6h-1zM209.75 824.45h1v1.6h-1zM225.12 824.45h1v1.6h-1zM240.50 824.45h1v1.6h-1zM255.88 824.45h1v1.6h-1zM271.25 824.45h1v1.6h-1zM286.62 824.45h1v1.6h-1zM302.00 824.45h1v1.6h-1zM317.38 824.45h1v1.6h-1zM332.75 824.45h1v1.6h-1zM348.12 824.45h1v1.6h-1zM363.50 824.45h1v1.6h-1zM378.88 824.45h1v1.6h-1zM394.25 824.45h1v1.6h-1zM409.62 824.45h1v1.6h-1zM425.00 824.45h1v1.6h-1zM440.38 824.45h1v1.6h-1zM455.75 824.45h1v1.6h-1zM471.12 824.45h1v1.6h-1zM486.50 824.45h1v1.6h-1zM501.88 824.45h1v1.6h-1zM517.25 824.45h1v1.6h-1zM532.62 824.45h1v1.6h-1zM548.00 824.45h1v1.6h-1zM563.38 824.45h1v1.6h-1zM578.75 824.45h1v1.6h-1zM594.12 824.45h1v1.6h-1zM609.50 824.45h1v1.6h-1zM624.88 824.45h1v1.6h-1zM640.25 824.45h1v1.6h-1zM655.62 824.45h1v1.6h-1zM671.00 824.45h1v1.6h-1zM686.38 824.45h1v1.6h-1zM701.75 824.45h1v1.6h-1zM717.12 824.45h1v1.6h-1zM732.50 824.45h1v1.6h-1zM747.88 824.45h1v1.6h-1zM763.25 824.45h1v1.6h-1zM778.62 824.45h1v1.6h-1zM794.00 824.45h1v1.6h-1zM809.38 824.45h1v1.6h-1zM824.75 824.45h1v1.6h-1zM840.12 824.45h1v1.6h-1zM855.50 824.45h1v1.6h-1zM870.88 824.45h1v1.6h-1zM886.25 824.45h1v1.6h-1zM901.62 824.45h1v1.6h-1zM917.00 824.45h1v1.6h-1zM56.00 839.83h1v1.6h-1zM71.38 839.83h1v1.6h-1zM86.75 839.83h1v1.6h-1zM102.12 839.83h1v1.6h-1zM117.50 839.83h1v1.6h-1zM132.88 839.83h1v1.6h-1zM148.25 839.83h1v1.6h-1zM163.62 839.83h1v1.6h-1zM179.00 839.83h1v1.6h-1zM194.38 839.83h1v1.6h-1zM209.75 839.83h1v1.6h-1zM225.12 839.83h1v1.6h-1zM240.50 839.83h1v1.6h-1zM255.88 839.83h1v1.6h-1zM271.25 839.83h1v1.6h-1zM286.62 839.83h1v1.6h-1zM302.00 839.83h1v1.6h-1zM317.38 839.83h1v1.6h-1zM332.75 839.83h1v1.6h-1zM348.12 839.83h1v1.6h-1zM363.50 839.83h1v1.6h-1zM378.88 839.83h1v1.6h-1zM394.25 839.83h1v1.6h-1zM409.62 839.83h1v1.6h-1zM425.00 839.83h1v1.6h-1zM440.38 839.83h1v1.6h-1zM455.75 839.83h1v1.6h-1zM471.12 839.83h1v1.6h-1zM486.50 839.83h1v1.6h-1zM501.88 839.83h1v1.6h-1zM517.25 839.83h1v1.6h-1zM532.62 839.83h1v1.6h-1zM548.00 839.83h1v1.6h-1zM563.38 839.83h1v1.6h-1zM578.75 839.83h1v1.6h-1zM594.12 839.83h1v1.6h-1zM609.50 839.83h1v1.6h-1zM624.88 839.83h1v1.6h-1zM640.25 839.83h1v1.6h-1zM655.62 839.83h1v1.6h-1zM671.00 839.83h1v1.6h-1zM686.38 839.83h1v1.6h-1zM701.75 839.83h1v1.6h-1zM717.12 839.83h1v1.6h-1zM732.50 839.83h1v1.6h-1zM747.88 839.83h1v1.6h-1zM763.25 839.83h1v1.6h-1zM778.62 839.83h1v1.6h-1zM794.00 839.83h1v1.6h-1zM809.38 839.83h1v1.6h-1zM824.75 839.83h1v1.6h-1zM840.12 839.83h1v1.6h-1zM855.50 839.83h1v1.6h-1zM870.88 839.83h1v1.6h-1zM886.25 839.83h1v1.6h-1zM901.62 839.83h1v1.6h-1zM917.00 839.83h1v1.6h-1zM56.00 855.20h1v1.6h-1zM71.38 855.20h1v1.6h-1zM86.75 855.20h1v1.6h-1zM102.12 855.20h1v1.6h-1zM117.50 855.20h1v1.6h-1zM132.88 855.20h1v1.6h-1zM148.25 855.20h1v1.6h-1zM163.62 855.20h1v1.6h-1zM179.00 855.20h1v1.6h-1zM194.38 855.20h1v1.6h-1zM209.75 855.20h1v1.6h-1zM225.12 855.20h1v1.6h-1zM240.50 855.20h1v1.6h-1zM255.88 855.20h1v1.6h-1zM271.25 855.20h1v1.6h-1zM286.62 855.20h1v1.6h-1zM302.00 855.20h1v1.6h-1zM317.38 855.20h1v1.6h-1zM332.75 855.20h1v1.6h-1zM348.12 855.20h1v1.6h-1zM363.50 855.20h1v1.6h-1zM378.88 855.20h1v1.6h-1zM394.25 855.20h1v1.6h-1zM409.62 855.20h1v1.6h-1zM425.00 855.20h1v1.6h-1zM440.38 855.20h1v1.6h-1zM455.75 855.20h1v1.6h-1zM471.12 855.20h1v1.6h-1zM486.50 855.20h1v1.6h-1zM501.88 855.20h1v1.6h-1zM517.25 855.20h1v1.6h-1zM532.62 855.20h1v1.6h-1zM548.00 855.20h1v1.6h-1zM563.38 855.20h1v1.6h-1zM578.75 855.20h1v1.6h-1zM594.12 855.20h1v1.6h-1zM609.50 855.20h1v1.6h-1zM624.88 855.20h1v1.6h-1zM640.25 855.20h1v1.6h-1zM655.62 855.20h1v1.6h-1zM671.00 855.20h1v1.6h-1zM686.38 855.20h1v1.6h-1zM701.75 855.20h1v1.6h-1zM717.12 855.20h1v1.6h-1zM732.50 855.20h1v1.6h-1zM747.88 855.20h1v1.6h-1zM763.25 855.20h1v1.6h-1zM778.62 855.20h1v1.6h-1zM794.00 855.20h1v1.6h-1zM809.38 855.20h1v1.6h-1zM824.75 855.20h1v1.6h-1zM840.12 855.20h1v1.6h-1zM855.50 855.20h1v1.6h-1zM870.88 855.20h1v1.6h-1zM886.25 855.20h1v1.6h-1zM901.62 855.20h1v1.6h-1zM917.00 855.20h1v1.6h-1zM56.00 870.58h1v1.6h-1zM71.38 870.58h1v1.6h-1zM86.75 870.58h1v1.6h-1zM102.12 870.58h1v1.6h-1zM117.50 870.58h1v1.6h-1zM132.88 870.58h1v1.6h-1zM148.25 870.58h1v1.6h-1zM163.62 870.58h1v1.6h-1zM179.00 870.58h1v1.6h-1zM194.38 870.58h1v1.6h-1zM209.75 870.58h1v1.6h-1zM225.12 870.58h1v1.6h-1zM240.50 870.58h1v1.6h-1zM255.88 870.58h1v1.6h-1zM271.25 870.58h1v1.6h-1zM286.62 870.58h1v1.6h-1zM302.00 870.58h1v1.6h-1zM317.38 870.58h1v1.6h-1zM332.75 870.58h1v1.6h-1zM348.12 870.58h1v1.6h-1zM363.50 870.58h1v1.6h-1zM378.88 870.58h1v1.6h-1zM394.25 870.58h1v1.6h-1zM409.62 870.58h1v1.6h-1zM425.00 870.58h1v1.6h-1zM440.38 870.58h1v1.6h-1zM455.75 870.58h1v1.6h-1zM471.12 870.58h1v1.6h-1zM486.50 870.58h1v1.6h-1zM501.88 870.58h1v1.6h-1zM517.25 870.58h1v1.6h-1zM532.62 870.58h1v1.6h-1zM548.00 870.58h1v1.6h-1zM563.38 870.58h1v1.6h-1zM578.75 870.58h1v1.6h-1zM594.12 870.58h1v1.6h-1zM609.50 870.58h1v1.6h-1zM624.88 870.58h1v1.6h-1zM640.25 870.58h1v1.6h-1zM655.62 870.58h1v1.6h-1zM671.00 870.58h1v1.6h-1zM686.38 870.58h1v1.6h-1zM701.75 870.58h1v1.6h-1zM717.12 870.58h1v1.6h-1zM732.50 870.58h1v1.6h-1zM747.88 870.58h1v1.6h-1zM763.25 870.58h1v1.6h-1zM778.62 870.58h1v1.6h-1zM794.00 870.58h1v1.6h-1zM809.38 870.58h1v1.6h-1zM824.75 870.58h1v1.6h-1zM840.12 870.58h1v1.6h-1zM855.50 870.58h1v1.6h-1zM870.88 870.58h1v1.6h-1zM886.25 870.58h1v1.6h-1zM901.62 870.58h1v1.6h-1zM917.00 870.58h1v1.6h-1zM56.00 885.95h1v1.6h-1zM71.38 885.95h1v1.6h-1zM86.75 885.95h1v1.6h-1zM102.12 885.95h1v1.6h-1zM117.50 885.95h1v1.6h-1zM132.88 885.95h1v1.6h-1zM148.25 885.95h1v1.6h-1zM163.62 885.95h1v1.6h-1zM179.00 885.95h1v1.6h-1zM194.38 885.95h1v1.6h-1zM209.75 885.95h1v1.6h-1zM225.12 885.95h1v1.6h-1zM240.50 885.95h1v1.6h-1zM255.88 885.95h1v1.6h-1zM271.25 885.95h1v1.6h-1zM286.62 885.95h1v1.6h-1zM302.00 885.95h1v1.6h-1zM317.38 885.95h1v1.6h-1zM332.75 885.95h1v1.6h-1zM348.12 885.95h1v1.6h-1zM363.50 885.95h1v1.6h-1zM378.88 885.95h1v1.6h-1zM394.25 885.95h1v1.6h-1zM409.62 885.95h1v1.6h-1zM425.00 885.95h1v1.6h-1zM440.38 885.95h1v1.6h-1zM455.75 885.95h1v1.6h-1zM471.12 885.95h1v1.6h-1zM486.50 885.95h1v1.6h-1zM501.88 885.95h1v1.6h-1zM517.25 885.95h1v1.6h-1zM532.62 885.95h1v1.6h-1zM548.00 885.95h1v1.6h-1zM563.38 885.95h1v1.6h-1zM578.75 885.95h1v1.6h-1zM594.12 885.95h1v1.6h-1zM609.50 885.95h1v1.6h-1zM624.88 885.95h1v1.6h-1zM640.25 885.95h1v1.6h-1zM655.62 885.95h1v1.6h-1zM671.00 885.95h1v1.6h-1zM686.38 885.95h1v1.6h-1zM701.75 885.95h1v1.6h-1zM717.12 885.95h1v1.6h-1zM732.50 885.95h1v1.6h-1zM747.88 885.95h1v1.6h-1zM763.25 885.95h1v1.6h-1zM778.62 885.95h1v1.6h-1zM794.00 885.95h1v1.6h-1zM809.38 885.95h1v1.6h-1zM824.75 885.95h1v1.6h-1zM840.12 885.95h1v1.6h-1zM855.50 885.95h1v1.6h-1zM870.88 885.95h1v1.6h-1zM886.25 885.95h1v1.6h-1zM901.62 885.95h1v1.6h-1zM917.00 885.95h1v1.6h-1zM56.00 901.33h1v1.6h-1zM71.38 901.33h1v1.6h-1zM86.75 901.33h1v1.6h-1zM102.12 901.33h1v1.6h-1zM117.50 901.33h1v1.6h-1zM132.88 901.33h1v1.6h-1zM148.25 901.33h1v1.6h-1zM163.62 901.33h1v1.6h-1zM179.00 901.33h1v1.6h-1zM194.38 901.33h1v1.6h-1zM209.75 901.33h1v1.6h-1zM225.12 901.33h1v1.6h-1zM240.50 901.33h1v1.6h-1zM255.88 901.33h1v1.6h-1zM271.25 901.33h1v1.6h-1zM286.62 901.33h1v1.6h-1zM302.00 901.33h1v1.6h-1zM317.38 901.33h1v1.6h-1zM332.75 901.33h1v1.6h-1zM348.12 901.33h1v1.6h-1zM363.50 901.33h1v1.6h-1zM378.88 901.33h1v1.6h-1zM394.25 901.33h1v1.6h-1zM409.62 901.33h1v1.6h-1zM425.00 901.33h1v1.6h-1zM440.38 901.33h1v1.6h-1zM455.75 901.33h1v1.6h-1zM471.12 901.33h1v1.6h-1zM486.50 901.33h1v1.6h-1zM501.88 901.33h1v1.6h-1zM517.25 901.33h1v1.6h-1zM532.62 901.33h1v1.6h-1zM548.00 901.33h1v1.6h-1zM563.38 901.33h1v1.6h-1zM578.75 901.33h1v1.6h-1zM594.12 901.33h1v1.6h-1zM609.50 901.33h1v1.6h-1zM624.88 901.33h1v1.6h-1zM640.25 901.33h1v1.6h-1zM655.62 901.33h1v1.6h-1zM671.00 901.33h1v1.6h-1zM686.38 901.33h1v1.6h-1zM701.75 901.33h1v1.6h-1zM717.12 901.33h1v1.6h-1zM732.50 901.33h1v1.6h-1zM747.88 901.33h1v1.6h-1zM763.25 901.33h1v1.6h-1zM778.62 901.33h1v1.6h-1zM794.00 901.33h1v1.6h-1zM809.38 901.33h1v1.6h-1zM824.75 901.33h1v1.6h-1zM840.12 901.33h1v1.6h-1zM855.50 901.33h1v1.6h-1zM870.88 901.33h1v1.6h-1zM886.25 901.33h1v1.6h-1zM901.62 901.33h1v1.6h-1zM917.00 901.33h1v1.6h-1z" fill="#9c9c9c"/>
<rect x="41.5" y="41.5" width="907" height="879" fill="none" stroke="#f2f2f2" stroke-width="1"/>
<path d="M188.5 100C188.5 105 188.5 117 188.5 122" fill="none" stroke="#9c9c9c" stroke-width="3"/>
<path d="M188.5 100C188.5 105 188.5 117 188.5 122" fill="none" stroke="#bdbdbd" stroke-width="1"/>
<path d="M188.5 143C188.5 148 188.5 178 188.5 183" fill="none" stroke="#9c9c9c" stroke-width="3"/>
<path d="M188.5 143C188.5 148 188.5 178 188.5 183" fill="none" stroke="#bdbdbd" stroke-width="1"/>
<path d="M320.5 154C320.5 182 188.5 155 188.5 183" fill="none" stroke="#9c9c9c" stroke-width="3"/>
<path d="M320.5 154C320.5 182 188.5 155 188.5 183" fill="none" stroke="#bdbdbd" stroke-width="1"/>
<path d="M188.5 204C188.5 209 188.5 220 188.5 225" fill="none" stroke="#9c9c9c" stroke-width="3"/>
<path d="M188.5 204C188.5 209 188.5 220 188.5 225" fill="none" stroke="#bdbdbd" stroke-width="1"/>
<path d="M188.5 245C188.5 253 184.5 261 184.5 269" fill="none" stroke="#9c9c9c" stroke-width="3"/>
<path d="M188.5 245C188.5 253 184.5 261 184.5 269" fill="none" stroke="#bdbdbd" stroke-width="1"/>
<path d="M185 290C185 298 188.5 316 188.5 324" fill="none" stroke="#9c9c9c" stroke-width="3"/>
<path d="M185 290C185 298 188.5 316 188.5 324" fill="none" stroke="#bdbdbd" stroke-width="1"/>
<path d="M224 290C224 308 188.5 306 188.5 324" fill="none" stroke="#9c9c9c" stroke-width="3"/>
<path d="M224 290C224 308 188.5 306 188.5 324" fill="none" stroke="#bdbdbd" stroke-width="1"/>
<path d="M188.5 345C188.5 355 193.5 355 193.5 365" fill="none" stroke="#9c9c9c" stroke-width="3"/>
<path d="M188.5 345C188.5 355 193.5 355 193.5 365" fill="none" stroke="#bdbdbd" stroke-width="1"/>
<path d="M193.5 385C193.5 400 203 403 203 418" fill="none" stroke="#9c9c9c" stroke-width="3"/>
<path d="M193.5 385C193.5 400 203 403 203 418" fill="none" stroke="#bdbdbd" stroke-width="1"/>
<path d="M203 439C203 454 194.5 480 194.5 495" fill="none" stroke="#9c9c9c" stroke-width="3"/>
<path d="M203 439C203 454 194.5 480 194.5 495" fill="none" stroke="#bdbdbd" stroke-width="1"/>
<path d="M203 439C203 469 476.5 447 476.5 477" fill="none" stroke="#9c9c9c" stroke-width="3"/>
<path d="M203 439C203 469 476.5 447 476.5 477" fill="none" stroke="#bdbdbd" stroke-width="1"/>
<path d="M194.5 515C194.5 535 203.5 551 203.5 571" fill="none" stroke="#9c9c9c" stroke-width="3"/>
<path d="M194.5 515C194.5 535 203.5 551 203.5 571" fill="none" stroke="#bdbdbd" stroke-width="1"/>
<path d="M203.5 593C203.5 598 203.5 609 203.5 614" fill="none" stroke="#9c9c9c" stroke-width="3"/>
<path d="M203.5 593C203.5 598 203.5 609 203.5 614" fill="none" stroke="#bdbdbd" stroke-width="1"/>
<path d="M476.5 497C476.5 517 455.5 572 455.5 592" fill="none" stroke="#9c9c9c" stroke-width="3"/>
<path d="M476.5 497C476.5 517 455.5 572 455.5 592" fill="none" stroke="#bdbdbd" stroke-width="1"/>
<path d="M476.5 497C476.5 527 597 513 597 543" fill="none" stroke="#9c9c9c" stroke-width="3"/>
<path d="M476.5 497C476.5 527 597 513 597 543" fill="none" stroke="#bdbdbd" stroke-width="1"/>
<path d="M476.5 497C476.5 527 746 515 746 545" fill="none" stroke="#9c9c9c" stroke-width="3"/>
<path d="M476.5 497C476.5 527 746 515 746 545" fill="none" stroke="#bdbdbd" stroke-width="1"/>
<path d="M597 564C597 576 585 580 585 592" fill="none" stroke="#9c9c9c" stroke-width="3"/>
<path d="M597 564C597 576 585 580 585 592" fill="none" stroke="#bdbdbd" stroke-width="1"/>
<path d="M746 565C746 577 712 580 712 592" fill="none" stroke="#9c9c9c" stroke-width="3"/>
<path d="M746 565C746 577 712 580 712 592" fill="none" stroke="#bdbdbd" stroke-width="1"/>
<path d="M455.5 613C455.5 643 399.5 730 399.5 760" fill="none" stroke="#9c9c9c" stroke-width="3"/>
<path d="M455.5 613C455.5 643 399.5 730 399.5 760" fill="none" stroke="#bdbdbd" stroke-width="1"/>
<path d="M455.5 613C455.5 645 573 618 573 650" fill="none" stroke="#9c9c9c" stroke-width="3"/>
<path d="M455.5 613C455.5 645 573 618 573 650" fill="none" stroke="#bdbdbd" stroke-width="1"/>
<path d="M585 613C585 618 585 755 585 760" fill="none" stroke="#9c9c9c" stroke-width="3"/>
<path d="M585 613C585 618 585 755 585 760" fill="none" stroke="#bdbdbd" stroke-width="1"/>
<path d="M585 613C585 645 714 618 714 650" fill="none" stroke="#9c9c9c" stroke-width="3"/>
<path d="M585 613C585 645 714 618 714 650" fill="none" stroke="#bdbdbd" stroke-width="1"/>
<path d="M712 613C712 643 772 730 772 760" fill="none" stroke="#9c9c9c" stroke-width="3"/>
<path d="M712 613C712 643 772 730 772 760" fill="none" stroke="#bdbdbd" stroke-width="1"/>
<path d="M712 613C712 645 879 618 879 650" fill="none" stroke="#9c9c9c" stroke-width="3"/>
<path d="M712 613C712 645 879 618 879 650" fill="none" stroke="#bdbdbd" stroke-width="1"/>
<path d="M203.5 637C203.5 657 208.5 688 208.5 708" fill="none" stroke="#dfeaa2" stroke-width="3.2"/>
<path d="M203.5 637C203.5 657 208.5 688 208.5 708" fill="none" stroke="#222222" stroke-width="1.8" stroke-dasharray="4.3 3.1"/>
<path d="M208.5 731C208.5 751 203 770 203 790" fill="none" stroke="#dfeaa2" stroke-width="3.2"/>
<path d="M208.5 731C208.5 751 203 770 203 790" fill="none" stroke="#222222" stroke-width="1.8" stroke-dasharray="4.3 3.1"/>
<path d="M204 823C204 828 203.5 852 203.5 857" fill="none" stroke="#dfeaa2" stroke-width="3.2"/>
<path d="M204 823C204 828 203.5 852 203.5 857" fill="none" stroke="#222222" stroke-width="1.8" stroke-dasharray="4.3 3.1"/>
<path d="M204 823C204 837 230 843 230 857" fill="none" stroke="#dfeaa2" stroke-width="3.2"/>
<path d="M204 823C204 837 230 843 230 857" fill="none" stroke="#222222" stroke-width="1.8" stroke-dasharray="4.3 3.1"/>
<rect x="179" y="75" width="25.5" height="25.5" fill="#333333"/>
<path d="M185.5 82L198 94.5M198 82L185.5 94.5" stroke="#d6ebe6" stroke-width="1.75"/>
<rect x="179" y="121" width="65.5" height="22" fill="#8b8b8b"/>
<rect x="179" y="126" width="65.5" height="13" fill="#303030"/>
<path d="M184.7 121a3.8 3.8 0 0 0 7.6 0z" fill="#dcb2b2"/>
<path d="M185.7 121a2.8 2.8 0 0 0 5.6 0z" fill="#4c2626"/>
<path d="M231.4 121a3.6 3.3 0 0 0 7.2 0z" fill="#d6d6d6"/>
<path d="M184.7 143a3.8 3.8 0 0 1 7.6 0z" fill="#c9d68c"/>
<path d="M185.7 143a2.8 2.8 0 0 1 5.6 0z" fill="#38421e"/>
<text x="183" y="136.3" class="ot">metro 100</text>
<rect x="312" y="133" width="31.5" height="21.5" rx="5" fill="#3a3a3a"/>
<text x="316" y="147.8" class="ot">print</text>
<rect x="179" y="182.5" width="80" height="22" fill="#8b8b8b"/>
<rect x="179" y="187.5" width="80" height="13" fill="#303030"/>
<path d="M184.7 182.5a3.8 3.8 0 0 0 7.6 0z" fill="#dcb2b2"/>
<path d="M185.7 182.5a2.8 2.8 0 0 0 5.6 0z" fill="#4c2626"/>
<path d="M184.7 204.5a3.8 3.8 0 0 1 7.6 0z" fill="#c9d68c"/>
<path d="M185.7 204.5a2.8 2.8 0 0 1 5.6 0z" fill="#38421e"/>
<path d="M245.4 204.5a3.6 3.3 0 0 1 7.2 0z" fill="#d6d6d6"/>
<text x="183" y="197.8" class="ot">serial c 9600</text>
<rect x="179" y="224" width="52" height="22" fill="#333333"/>
<path d="M183 228.8L189.6 235L183 241.2z" fill="#727272"/>
<text x="192" y="239.2" class="ot">10</text>
<rect x="175.5" y="268.5" width="59" height="22" fill="#8b8b8b"/>
<rect x="175.5" y="273.5" width="59" height="13" fill="#303030"/>
<path d="M181.39999999999998 268.5a3.8 3.8 0 0 0 7.6 0z" fill="#dcb2b2"/>
<path d="M182.39999999999998 268.5a2.8 2.8 0 0 0 5.6 0z" fill="#4c2626"/>
<path d="M200.9 268.5a3.6 3.3 0 0 0 7.2 0z" fill="#d6d6d6"/>
<path d="M220.20000000000002 268.5a3.6 3.3 0 0 0 7.2 0z" fill="#d6d6d6"/>
<path d="M181.39999999999998 290.5a3.8 3.8 0 0 1 7.6 0z" fill="#c9d68c"/>
<path d="M182.39999999999998 290.5a2.8 2.8 0 0 1 5.6 0z" fill="#38421e"/>
<path d="M200.9 290.5a3.6 3.3 0 0 1 7.2 0z" fill="#d6d6d6"/>
<path d="M220.0 290.5a3.8 3.8 0 0 1 7.6 0z" fill="#c9d68c"/>
<path d="M221.0 290.5a2.8 2.8 0 0 1 5.6 0z" fill="#38421e"/>
<text x="179.5" y="283.8" class="ot">sel 13 10</text>
<rect x="179" y="323.5" width="82" height="22.5" fill="#8b8b8b"/>
<rect x="179" y="328.5" width="82" height="13.5" fill="#303030"/>
<path d="M184.7 323.5a3.8 3.8 0 0 0 7.6 0z" fill="#dcb2b2"/>
<path d="M185.7 323.5a2.8 2.8 0 0 0 5.6 0z" fill="#4c2626"/>
<path d="M247.9 323.5a3.6 3.3 0 0 0 7.2 0z" fill="#d6d6d6"/>
<path d="M184.7 346.0a3.8 3.8 0 0 1 7.6 0z" fill="#c9d68c"/>
<path d="M185.7 346.0a2.8 2.8 0 0 1 5.6 0z" fill="#38421e"/>
<path d="M247.9 346.0a3.6 3.3 0 0 1 7.2 0z" fill="#d6d6d6"/>
<text x="183" y="338.8" class="ot">zl group 1000</text>
<rect x="184" y="364" width="42" height="22" fill="#8b8b8b"/>
<rect x="184" y="369" width="42" height="13" fill="#303030"/>
<path d="M189.7 364a3.8 3.8 0 0 0 7.6 0z" fill="#dcb2b2"/>
<path d="M190.7 364a2.8 2.8 0 0 0 5.6 0z" fill="#4c2626"/>
<path d="M200.4 364a3.6 3.3 0 0 0 7.2 0z" fill="#d6d6d6"/>
<path d="M210.4 364a3.6 3.3 0 0 0 7.2 0z" fill="#d6d6d6"/>
<path d="M189.7 386a3.8 3.8 0 0 1 7.6 0z" fill="#c9d68c"/>
<path d="M190.7 386a2.8 2.8 0 0 1 5.6 0z" fill="#38421e"/>
<text x="188" y="379.3" class="ot">itoa</text>
<rect x="194" y="417.5" width="72" height="22.5" fill="#8b8b8b"/>
<rect x="194" y="422.5" width="72" height="13.5" fill="#303030"/>
<path d="M199.7 417.5a3.8 3.8 0 0 0 7.6 0z" fill="#dcb2b2"/>
<path d="M200.7 417.5a2.8 2.8 0 0 0 5.6 0z" fill="#4c2626"/>
<path d="M199.7 440.0a3.8 3.8 0 0 1 7.6 0z" fill="#c9d68c"/>
<path d="M200.7 440.0a2.8 2.8 0 0 1 5.6 0z" fill="#38421e"/>
<text x="198" y="432.8" class="ot">fromsymbol</text>
<rect x="185" y="494" width="37.5" height="22" fill="#8b8b8b"/>
<rect x="185" y="499" width="37.5" height="13" fill="#303030"/>
<path d="M190.7 494a3.8 3.8 0 0 0 7.6 0z" fill="#dcb2b2"/>
<path d="M191.7 494a2.8 2.8 0 0 0 5.6 0z" fill="#4c2626"/>
<path d="M209.4 494a3.6 3.3 0 0 0 7.2 0z" fill="#d6d6d6"/>
<path d="M190.7 516a3.8 3.8 0 0 1 7.6 0z" fill="#c9d68c"/>
<path d="M191.7 516a2.8 2.8 0 0 1 5.6 0z" fill="#38421e"/>
<text x="189" y="509.3" class="ot">* 100</text>
<rect x="194" y="570.5" width="45.5" height="23" rx="5" fill="#3a3a3a"/>
<text x="197.8" y="586.4" class="ot" style="font-size:12.9px">$1 20</text>
<rect x="194" y="614" width="41" height="24" fill="#8b8b8b"/>
<rect x="194" y="619" width="41" height="15" fill="#303030"/>
<path d="M199.7 614a3.8 3.8 0 0 0 7.6 0z" fill="#dcb2b2"/>
<path d="M200.7 614a2.8 2.8 0 0 0 5.6 0z" fill="#4c2626"/>
<path d="M220.9 614a3.6 3.3 0 0 0 7.2 0z" fill="#d6d6d6"/>
<path d="M199.7 638a3.8 3.8 0 0 1 7.6 0z" fill="#c9d68c"/>
<path d="M200.7 638a2.8 2.8 0 0 1 5.6 0z" fill="#38421e"/>
<path d="M220.9 638a3.6 3.3 0 0 1 7.2 0z" fill="#d6d6d6"/>
<text x="198" y="629.3" class="ot">line~</text>
<rect x="199" y="707.5" width="77" height="24" fill="#8b8b8b"/>
<rect x="199" y="712.5" width="77" height="15" fill="#303030"/>
<path d="M204.7 707.5a3.8 3.8 0 0 0 7.6 0z" fill="#dcb2b2"/>
<path d="M205.7 707.5a2.8 2.8 0 0 0 5.6 0z" fill="#4c2626"/>
<path d="M262.4 707.5a3.6 3.3 0 0 0 7.2 0z" fill="#d6d6d6"/>
<path d="M204.7 731.5a3.8 3.8 0 0 1 7.6 0z" fill="#c9d68c"/>
<path d="M205.7 731.5a2.8 2.8 0 0 1 5.6 0z" fill="#38421e"/>
<text x="203" y="722.8" class="ot">cycle~ 140.</text>
<rect x="467.5" y="476" width="35" height="22" fill="#8b8b8b"/>
<rect x="467.5" y="481" width="35" height="13" fill="#303030"/>
<path d="M473.2 476a3.8 3.8 0 0 0 7.6 0z" fill="#dcb2b2"/>
<path d="M474.2 476a2.8 2.8 0 0 0 5.6 0z" fill="#4c2626"/>
<path d="M488.9 476a3.6 3.3 0 0 0 7.2 0z" fill="#d6d6d6"/>
<path d="M473.2 498a3.8 3.8 0 0 1 7.6 0z" fill="#c9d68c"/>
<path d="M474.2 498a2.8 2.8 0 0 1 5.6 0z" fill="#38421e"/>
<text x="471.5" y="491.3" class="ot">* 0.1</text>
<rect x="587.5" y="542.5" width="34.5" height="22" fill="#8b8b8b"/>
<rect x="587.5" y="547.5" width="34.5" height="13" fill="#303030"/>
<path d="M593.2 542.5a3.8 3.8 0 0 0 7.6 0z" fill="#dcb2b2"/>
<path d="M594.2 542.5a2.8 2.8 0 0 0 5.6 0z" fill="#4c2626"/>
<path d="M608.9 542.5a3.6 3.3 0 0 0 7.2 0z" fill="#d6d6d6"/>
<path d="M593.2 564.5a3.8 3.8 0 0 1 7.6 0z" fill="#c9d68c"/>
<path d="M594.2 564.5a2.8 2.8 0 0 1 5.6 0z" fill="#38421e"/>
<text x="591.5" y="557.8" class="ot">* 1.8</text>
<rect x="736.5" y="544" width="34.5" height="22" fill="#8b8b8b"/>
<rect x="736.5" y="549" width="34.5" height="13" fill="#303030"/>
<path d="M742.2 544a3.8 3.8 0 0 0 7.6 0z" fill="#dcb2b2"/>
<path d="M743.2 544a2.8 2.8 0 0 0 5.6 0z" fill="#4c2626"/>
<path d="M757.9 544a3.6 3.3 0 0 0 7.2 0z" fill="#d6d6d6"/>
<path d="M742.2 566a3.8 3.8 0 0 1 7.6 0z" fill="#c9d68c"/>
<path d="M743.2 566a2.8 2.8 0 0 1 5.6 0z" fill="#38421e"/>
<text x="740.5" y="559.3" class="ot">* 1.5</text>
<rect x="446" y="591.5" width="108" height="22" fill="#8b8b8b"/>
<rect x="446" y="596.5" width="108" height="13" fill="#303030"/>
<path d="M451.7 591.5a3.8 3.8 0 0 0 7.6 0z" fill="#dcb2b2"/>
<path d="M452.7 591.5a2.8 2.8 0 0 0 5.6 0z" fill="#4c2626"/>
<path d="M451.7 613.5a3.8 3.8 0 0 1 7.6 0z" fill="#c9d68c"/>
<path d="M452.7 613.5a2.8 2.8 0 0 1 5.6 0z" fill="#38421e"/>
<text x="450" y="606.8" class="ot">prepend /tounity/0</text>
<rect x="575.5" y="591.5" width="107" height="22" fill="#8b8b8b"/>
<rect x="575.5" y="596.5" width="107" height="13" fill="#303030"/>
<path d="M581.2 591.5a3.8 3.8 0 0 0 7.6 0z" fill="#dcb2b2"/>
<path d="M582.2 591.5a2.8 2.8 0 0 0 5.6 0z" fill="#4c2626"/>
<path d="M581.2 613.5a3.8 3.8 0 0 1 7.6 0z" fill="#c9d68c"/>
<path d="M582.2 613.5a2.8 2.8 0 0 1 5.6 0z" fill="#38421e"/>
<text x="579.5" y="606.8" class="ot">prepend /tounity/1</text>
<rect x="702.5" y="591.5" width="107" height="22" fill="#8b8b8b"/>
<rect x="702.5" y="596.5" width="107" height="13" fill="#303030"/>
<path d="M708.2 591.5a3.8 3.8 0 0 0 7.6 0z" fill="#dcb2b2"/>
<path d="M709.2 591.5a2.8 2.8 0 0 0 5.6 0z" fill="#4c2626"/>
<path d="M708.2 613.5a3.8 3.8 0 0 1 7.6 0z" fill="#c9d68c"/>
<path d="M709.2 613.5a2.8 2.8 0 0 1 5.6 0z" fill="#38421e"/>
<text x="706.5" y="606.8" class="ot">prepend /tounity/2</text>
<rect x="447" y="649.5" width="135" height="21.5" rx="4" fill="#3a3a3a"/>
<text x="451" y="664.3" class="ot">/tounity/0 -0.1</text>
<rect x="605" y="649.5" width="118.5" height="21.5" rx="4" fill="#3a3a3a"/>
<text x="609" y="664.3" class="ot">/tounity/1 -0.18</text>
<rect x="774.5" y="649.5" width="114" height="21.5" rx="4" fill="#3a3a3a"/>
<text x="778.5" y="664.3" class="ot">/tounity/2 -0.15</text>
<rect x="390" y="759" width="175" height="22" fill="#8b8b8b"/>
<rect x="390" y="764" width="175" height="13" fill="#303030"/>
<path d="M395.7 759a3.8 3.8 0 0 0 7.6 0z" fill="#dcb2b2"/>
<path d="M396.7 759a2.8 2.8 0 0 0 5.6 0z" fill="#4c2626"/>
<text x="394" y="774.3" class="ot">udpsend 192.168.0.110 12345</text>
<rect x="575.5" y="759" width="174" height="22" fill="#8b8b8b"/>
<rect x="575.5" y="764" width="174" height="13" fill="#303030"/>
<path d="M581.2 759a3.8 3.8 0 0 0 7.6 0z" fill="#dcb2b2"/>
<path d="M582.2 759a2.8 2.8 0 0 0 5.6 0z" fill="#4c2626"/>
<text x="579.5" y="774.3" class="ot">udpsend 192.168.0.110 12345</text>
<clipPath id="c3"><rect x="763" y="759" width="168" height="22"/></clipPath>
<g clip-path="url(#c3)">
<rect x="763" y="759" width="175" height="22" fill="#8b8b8b"/>
<rect x="763" y="764" width="175" height="13" fill="#303030"/>
<path d="M768.7 759a3.8 3.8 0 0 0 7.6 0z" fill="#dcb2b2"/>
<path d="M769.7 759a2.8 2.8 0 0 0 5.6 0z" fill="#4c2626"/>
<text x="767" y="774.3" class="ot">udpsend 192.168.0.110 12345</text>
</g>
<rect x="195.5" y="789.8" width="135" height="6.4" fill="#2b2b2b"/>
<rect x="195.7" y="789.8" width="60.3" height="6.4" fill="#38ec62"/>
<rect x="195.7" y="789.8" width="60.3" height="1.2" fill="#2fb350"/>
<rect x="320" y="790" width="2" height="6" fill="#bbbbbb"/>
<path d="M253.9 797L249.3 805.6H258.5z" fill="#757575"/>
<text x="196.8" y="820.5" class="dt" style="font-size:13.2px">-37 dB</text>
<rect x="194" y="856" width="46" height="46" fill="#2b2b2b"/>
<path d="M205 872.8H209L218.3 866.3V893L209 886H205a1.8 1.8 0 0 1 -1.8 -1.8V874.6a1.8 1.8 0 0 1 1.8 -1.8z" fill="#cde4e8"/>
<path d="M220.47 876.18A4.3 4.3 0 0 1 220.47 883.22M222.93 873.40A8.0 8.0 0 0 1 222.93 886.00M225.71 870.51A12.0 12.0 0 0 1 225.71 888.89" fill="none" stroke="#cde4e8" stroke-width="2.1"/>
<rect x="243.6" y="859.8" width="55.6" height="39.4" fill="#e6e6e6" stroke="#bdbdbd" stroke-width="1.3"/>
<path d="M264 861H292a5.5 5.5 0 0 1 5.5 5.5V892.5a5.5 5.5 0 0 1 -5.5 5.5H264a5.5 5.5 0 0 1 -5.5 -5.5V887.5L244 879.5L258.5 871V866.5a5.5 5.5 0 0 1 5.5 -5.5z" fill="#ffffff" stroke="#cfcfcf" stroke-width="0.8"/>
<text x="263" y="875.8" class="dt" style="font-size:12.8px">start</text>
<text x="263" y="890.7" class="dt" style="font-size:12.8px">dsp</text>
<circle cx="316.8" cy="880" r="9.6" fill="#f6ba62"/>
<text x="313.3" y="884.6" class="dt" style="font-size:11px">1</text>
<rect x="935.5" y="61" width="10" height="823" rx="5" fill="#c1c1c1"/>
<rect x="46" y="908" width="855" height="10" rx="5" fill="#c1c1c1"/>
<text x="8" y="24.5" class="ui">82%</text>
<path d="M42 16.5H49L45.5 22.5z" fill="#e3e3e3"/>
<path d="M89.5 9V29.5" stroke="#e3e3e3" stroke-width="1.6"/>
<path d="M91 10H108.5M91 13H108.5M91 25.5H108.5M91 28.5H108.5" stroke="#e3e3e3" stroke-width="1.3"/>
<path d="M108 10V28.5" stroke="#e3e3e3" stroke-width="1" opacity="0.7"/>
<path d="M145 10H129a3 3 0 0 0 -3 3V25.5a3 3 0 0 0 3 3H145" fill="none" stroke="#e3e3e3" stroke-width="1.6"/>
<text x="0" y="0" transform="translate(130.6 22.8) skewX(-20)" style="font-family:'Liberation Sans',sans-serif;font-weight:bold;font-size:10.6px" fill="#e3e3e3">m</text>
<path d="M161 12.9H181V24.2H178V28.8L172.8 24.2H161z" fill="#e3e3e3"/>
<rect x="197.8" y="10" width="19" height="18.5" fill="none" stroke="#e3e3e3" stroke-width="1.6"/>
<path d="M202.5 14.5L212 24M212 14.5L202.5 24" stroke="#e3e3e3" stroke-width="1.4"/>
<rect x="234.3" y="10" width="19" height="18.5" fill="none" stroke="#e3e3e3" stroke-width="1.6"/>
<circle cx="243.8" cy="19.3" r="4.6" fill="none" stroke="#e3e3e3" stroke-width="1.5"/>
<rect x="270.5" y="10" width="19" height="18.5" fill="none" stroke="#e3e3e3" stroke-width="1.6"/>
<path d="M273 15.3L280 19.2L273 23.1z" fill="#e3e3e3"/>
<rect x="306.8" y="10" width="19" height="18.5" fill="none" stroke="#e3e3e3" stroke-width="1.6"/>
<path d="M309 18.9H323" stroke="#e3e3e3" stroke-width="1.6"/>
<path d="M345.6 26.3A9.3 9.3 0 1 1 359.2 26.3" fill="none" stroke="#e3e3e3" stroke-width="2"/>
<path d="M352.4 19.5L356.6 12.2" stroke="#e3e3e3" stroke-width="2"/>
<path d="M381.5 19.3H396.3M388.9 12V26.5" stroke="#e3e3e3" stroke-width="3.6"/>
<path d="M239.5 33.5H247.89999999999998L243.7 38z" fill="#e3e3e3"/>
<path d="M275.40000000000003 33.5H283.8L279.6 38z" fill="#e3e3e3"/>
<path d="M312.0 33.5H320.4L316.2 38z" fill="#e3e3e3"/>
<path d="M348.2 33.5H356.59999999999997L352.4 38z" fill="#e3e3e3"/>
<path d="M384.5 33.5H392.9L388.7 38z" fill="#e3e3e3"/>
<path d="M436.5 19.5L445.5 10.5L454.5 19.5L445.5 28z" fill="none" stroke="#e3e3e3" stroke-width="1.4"/>
<path d="M437.5 19.5Q446 15.5 453.5 19.5L445.5 27.5z" fill="#e3e3e3"/>
<path d="M442.5 10L446 13.5" stroke="#e3e3e3" stroke-width="1.4"/>
<path d="M454.5 21Q457 24 456 26a1.8 1.8 0 0 1 -3.4 0Q452 24 454.5 21z" fill="#e3e3e3"/>
<rect x="924" y="8" width="3" height="3.7" fill="#e3e3e3"/>
<rect x="928.2" y="8" width="10" height="3.7" fill="#e3e3e3"/>
<rect x="939" y="8" width="3" height="3.7" fill="#e3e3e3"/>
<rect x="943" y="8" width="3" height="3.7" fill="#e3e3e3"/>
<rect x="920" y="13" width="3" height="3.7" fill="#e2c64a"/>
<rect x="924" y="13" width="3" height="3.7" fill="#e3e3e3"/>
<rect x="928.2" y="13" width="10" height="3.7" fill="#e3e3e3"/>
<rect x="939" y="13" width="3" height="3.7" fill="#e3e3e3"/>
<rect x="943" y="13" width="3" height="3.7" fill="#e3e3e3"/>
<rect x="920" y="18.2" width="3" height="3.7" fill="#ece3b0"/>
<rect x="924" y="18.2" width="3" height="3.7" fill="#e3e3e3"/>
<rect x="928.2" y="18.2" width="10" height="3.7" fill="#e3e3e3"/>
<rect x="939" y="18.2" width="3" height="3.7" fill="#e3e3e3"/>
<rect x="943" y="18.2" width="3" height="3.7" fill="#e3e3e3"/>
<rect x="920" y="23.3" width="3" height="3.7" fill="#e3e3e3"/>
<rect x="924" y="23.3" width="3" height="3.7" fill="#e3e3e3"/>
<rect x="928.2" y="23.3" width="10" height="3.7" fill="#e3e3e3"/>
<rect x="939" y="23.3" width="3" height="3.7" fill="#e3e3e3"/>
<rect x="943" y="23.3" width="3" height="3.7" fill="#e3e3e3"/>
<rect x="920" y="28.3" width="3" height="3.7" fill="#e3e3e3"/>
<rect x="924" y="28.3" width="3" height="3.7" fill="#e3e3e3"/>
<rect x="928.2" y="28.3" width="3" height="3.7" fill="#e3e3e3"/>
<path d="M10 235.5L18.5 231L27 235.5L18.5 240z" fill="#e3e3e3"/>
<path d="M10 237L18 241.3V250L10 245.7z" fill="#e3e3e3"/>
<path d="M27 237L19 241.3V250L27 245.7z" fill="#e3e3e3"/>
<circle cx="29.3" cy="233.5" r="5.8" fill="#eccf22" stroke="#262626" stroke-width="1.2"/>
<circle cx="18.9" cy="285.5" r="9" fill="none" stroke="#e3e3e3" stroke-width="2"/>
<circle cx="18.9" cy="285.5" r="4" fill="none" stroke="#e3e3e3" stroke-width="2"/>
<rect x="9.8" y="325.6" width="18.6" height="12.4" rx="0.8" fill="none" stroke="#e3e3e3" stroke-width="1.6"/>
<path d="M11 328.6H27.4M11 335.2H27.4" stroke="#e3e3e3" stroke-width="1.3"/>
<circle cx="12.3" cy="339.2" r="1.3" fill="#e3e3e3"/><circle cx="25.6" cy="339.2" r="1.3" fill="#e3e3e3"/><circle cx="12.3" cy="325" r="1.2" fill="#e3e3e3"/>
<path d="M19.5 369V385" stroke="#e3e3e3" stroke-width="2"/>
<ellipse cx="16" cy="385.5" rx="4" ry="3" transform="rotate(-25 16 385.5)" fill="#e3e3e3"/>
<path d="M19.5 369.5Q21 373 25 375Q27 377 25.5 381Q26 376 20 375" fill="#e3e3e3"/>
<rect x="9.3" y="415" width="3.3" height="3.2" fill="#e3e3e3"/>
<rect x="26" y="415" width="3.3" height="3.2" fill="#e3e3e3"/>
<rect x="9.3" y="420.6" width="3.3" height="3.2" fill="#e3e3e3"/>
<rect x="26" y="420.6" width="3.3" height="3.2" fill="#e3e3e3"/>
<rect x="9.3" y="426.2" width="3.3" height="3.2" fill="#e3e3e3"/>
<rect x="26" y="426.2" width="3.3" height="3.2" fill="#e3e3e3"/>
<rect x="9.3" y="431.8" width="3.3" height="3.2" fill="#e3e3e3"/>
<rect x="26" y="431.8" width="3.3" height="3.2" fill="#e3e3e3"/>
<path d="M16 419.6L23.5 424.8L16 430z" fill="#e3e3e3"/>
<rect x="9.5" y="461.5" width="19" height="19" fill="none" stroke="#e3e3e3" stroke-width="1.6"/>
<circle cx="13.2" cy="465.6" r="1.7" fill="#e3e3e3"/>
<path d="M10.8 478.5L15.6 471L20.6 478.5z" fill="#e3e3e3"/>
<path d="M16.5 6V17.5A4 4 0 0 1 8.5 17.5V5A2.5 2.5 0 0 1 13.5 5V15.5A1 1 0 0 1 11.5 15.5V6" fill="none" stroke="#e3e3e3" stroke-width="1.15" transform="translate(18.9 516.9) rotate(135) scale(-1.2 1.2) translate(-12.5 -12)"/>
<path d="M9 563.8H15" stroke="#e3e3e3" stroke-width="4"/>
<path d="M23.6 554H22a9 9.8 0 0 0 0 19.6h1.6z" fill="#e3e3e3"/>
<path d="M23 559.5H29.2M23 568.2H29.2" stroke="#e3e3e3" stroke-width="2.8"/>
<circle cx="19.1" cy="609.9" r="10" fill="#e3e3e3"/>
<text x="19.1" y="614.5" text-anchor="middle" style="font-family:'Liberation Serif',serif;font-style:italic;font-weight:bold;font-size:15px" fill="#2a2a2a">v</text>
<circle cx="19.1" cy="655.7" r="10" fill="#e3e3e3"/>
<text x="18.6" y="661" text-anchor="middle" style="font-family:'Liberation Serif',serif;font-style:italic;font-weight:bold;font-size:16px" fill="#2a2a2a">b</text>
<path d="M19.10 693.20L21.57 699.80L28.61 700.11L23.09 704.50L24.98 711.29L19.10 707.40L13.22 711.29L15.11 704.50L9.59 700.11L16.63 699.80z" fill="#e3e3e3"/>
<circle cx="967.3" cy="233.8" r="6.1" fill="none" stroke="#e3e3e3" stroke-width="2.3"/>
<path d="M971.8 238.3L979.6 245.3" stroke="#e3e3e3" stroke-width="2.6"/>
<circle cx="970.6" cy="293.7" r="10" fill="#e3e3e3"/>
<text x="970.6" y="300.6" text-anchor="middle" style="font-family:'Liberation Serif',serif;font-style:italic;font-weight:bold;font-size:19px" fill="#2a2a2a">i</text>
<rect x="960" y="343" width="9.3" height="16.3" fill="#e3e3e3"/>
<rect x="971" y="343" width="10" height="16.3" fill="#e3e3e3"/>
<rect x="960" y="400.0" width="3" height="2.2" fill="#e3e3e3"/>
<rect x="965.5" y="400.0" width="15.5" height="2.2" fill="#e3e3e3"/>
<rect x="960" y="403.7" width="3" height="2.2" fill="#e3e3e3"/>
<rect x="965.5" y="403.7" width="15.5" height="2.2" fill="#e3e3e3"/>
<rect x="960" y="407.4" width="3" height="2.2" fill="#e3e3e3"/>
<rect x="965.5" y="407.4" width="15.5" height="2.2" fill="#e3e3e3"/>
<rect x="960" y="411.1" width="3" height="2.2" fill="#e3e3e3"/>
<rect x="965.5" y="411.1" width="15.5" height="2.2" fill="#e3e3e3"/>
<rect x="960" y="414.8" width="3" height="2.2" fill="#e3e3e3"/>
<rect x="965.5" y="414.8" width="15.5" height="2.2" fill="#e3e3e3"/>
<path d="M965 499H976V503H980.5V518.5H960V503H965z" fill="#e3e3e3"/>
<circle cx="972.5" cy="510.5" r="4.8" fill="#313131"/>
<circle cx="972.5" cy="510.5" r="2.3" fill="#e3e3e3"/>
<rect x="962" y="504.5" width="2.5" height="1.5" fill="#313131"/>
<rect x="962" y="508" width="2.5" height="1.5" fill="#313131"/>
<rect x="962" y="511.5" width="2.5" height="1.5" fill="#313131"/>
<rect x="962" y="515" width="2.5" height="1.5" fill="#313131"/>
<path d="M963.2 557.3V574.7" stroke="#e3e3e3" stroke-width="1.8"/>
<circle cx="963.2" cy="566.6" r="2.9" fill="#e3e3e3"/>
<path d="M970 557.3V574.7" stroke="#e3e3e3" stroke-width="1.8"/>
<circle cx="970" cy="562.2" r="2.9" fill="#e3e3e3"/>
<path d="M977.3 557.3V574.7" stroke="#e3e3e3" stroke-width="1.8"/>
<circle cx="977.3" cy="569.1" r="2.9" fill="#e3e3e3"/>
<rect x="959" y="783" width="9" height="30" fill="#5c5c5c"/>
<rect x="973" y="783" width="9" height="30" fill="#5c5c5c"/>
<rect x="959" y="815.60" width="9" height="3.2" fill="#5a5a5a"/>
<rect x="973" y="815.60" width="9" height="3.2" fill="#5a5a5a"/>
<rect x="959" y="820.50" width="9" height="3.2" fill="#5a5a5a"/>
<rect x="973" y="820.50" width="9" height="3.2" fill="#5a5a5a"/>
<rect x="959" y="825.40" width="9" height="3.2" fill="#5a5a5a"/>
<rect x="973" y="825.40" width="9" height="3.2" fill="#5a5a5a"/>
<rect x="959" y="830.30" width="9" height="3.2" fill="#5a5a5a"/>
<rect x="973" y="830.30" width="9" height="3.2" fill="#5a5a5a"/>
<rect x="959" y="835.20" width="9" height="3.2" fill="#5a5a5a"/>
<rect x="973" y="835.20" width="9" height="3.2" fill="#5a5a5a"/>
<rect x="959" y="840.10" width="9" height="3.2" fill="#5a5a5a"/>
<rect x="973" y="840.10" width="9" height="3.2" fill="#5a5a5a"/>
<rect x="959" y="845.00" width="9" height="3.2" fill="#5a5a5a"/>
<rect x="973" y="845.00" width="9" height="3.2" fill="#5a5a5a"/>
<rect x="959" y="849.90" width="9" height="3.2" fill="#5a5a5a"/>
<rect x="973" y="849.90" width="9" height="3.2" fill="#5a5a5a"/>
<rect x="959" y="854.80" width="9" height="3.2" fill="#5a5a5a"/>
<rect x="973" y="854.80" width="9" height="3.2" fill="#5a5a5a"/>
<rect x="959" y="859.70" width="9" height="3.2" fill="#5a5a5a"/>
<rect x="973" y="859.70" width="9" height="3.2" fill="#5a5a5a"/>
<rect x="959" y="864.60" width="9" height="3.2" fill="#5a5a5a"/>
<rect x="973" y="864.60" width="9" height="3.2" fill="#5a5a5a"/>
<rect x="959" y="869.50" width="9" height="3.2" fill="#5a5a5a"/>
<rect x="973" y="869.50" width="9" height="3.2" fill="#5a5a5a"/>
<rect x="959" y="874.40" width="9" height="3.2" fill="#5a5a5a"/>
<rect x="973" y="874.40" width="9" height="3.2" fill="#5a5a5a"/>
<rect x="959" y="879.30" width="9" height="3.9" fill="#52b6f2"/>
<rect x="973" y="879.30" width="9" height="3.9" fill="#52b6f2"/>
<rect x="959" y="884.20" width="9" height="3.9" fill="#52b6f2"/>
<rect x="973" y="884.20" width="9" height="3.9" fill="#52b6f2"/>
<rect x="959" y="889.10" width="9" height="3.9" fill="#52b6f2"/>
<rect x="973" y="889.10" width="9" height="3.9" fill="#52b6f2"/>
<rect x="959" y="894.00" width="9" height="3.9" fill="#52b6f2"/>
<rect x="973" y="894.00" width="9" height="3.9" fill="#52b6f2"/>
<rect x="959" y="898.90" width="9" height="3.9" fill="#52b6f2"/>
<rect x="973" y="898.90" width="9" height="3.9" fill="#52b6f2"/>
<rect x="959" y="903.80" width="9" height="3.9" fill="#52b6f2"/>
<rect x="973" y="903.80" width="9" height="3.9" fill="#52b6f2"/>
<rect x="959" y="908.70" width="9" height="3.9" fill="#52b6f2"/>
<rect x="973" y="908.70" width="9" height="3.9" fill="#52b6f2"/>
<rect x="959" y="913.60" width="9" height="3.9" fill="#52b6f2"/>
<rect x="973" y="913.60" width="9" height="3.9" fill="#52b6f2"/>
<circle cx="970.5" cy="816.7" r="6.5" fill="#e6e6e6"/>
<path d="M10.5 941.5V938a4.2 4.2 0 0 1 8.4 0" fill="none" stroke="#e3e3e3" stroke-width="1.8"/>
<rect x="15" y="941.8" width="14.8" height="10" rx="1" fill="#e3e3e3"/>
<circle cx="22.4" cy="945.6" r="1.5" fill="#313131"/><rect x="21.7" y="946" width="1.4" height="3.2" fill="#313131"/>
<path d="M58 934.2H67.5V944" fill="none" stroke="#e8cc2a" stroke-width="2.6"/>
<path d="M58.7 952H49.5V934.2H58" fill="none" stroke="#e8cc2a" stroke-width="2.6"/>
<path d="M58 939.5L66.8 945.5L63 946.3L66 951.5L64.2 952.5L61.3 947.3L58.5 950z" fill="#e8cc2a"/>
<rect x="105.7" y="933" width="20.5" height="12.4" fill="#e3e3e3"/>
<path d="M108.5 952L116 945.5L123.5 952" fill="none" stroke="#e3e3e3" stroke-width="1.8"/>
<rect x="163.4" y="934.8" width="13.8" height="10.6" fill="#e3e3e3"/>
<rect x="168.8" y="939.4" width="16.2" height="13.1" fill="#313131"/>
<rect x="169.8" y="940.4" width="14.2" height="11.1" fill="#e3e3e3"/>
<path d="M225.1 932.6V952.9M230.9 932.6V952.9M236.8 932.6V952.9M220.9 937H241.4M220.9 943H241.4M220.9 948.7H241.4" stroke="#e3e3e3" stroke-width="1.4"/>
<path d="M16.5 6V17.5A4 4 0 0 1 8.5 17.5V5A2.5 2.5 0 0 1 13.5 5V15.5A1 1 0 0 1 11.5 15.5V6" fill="none" stroke="#5e5e5e" stroke-width="1.4" transform="translate(286.4 944.6) rotate(135) scale(-0.95 0.95) translate(-12.5 -12)"/>
<path d="M289.2 937.4H298.7M293.8 932.7V941.9" stroke="#5e5e5e" stroke-width="1.6"/>
<path d="M338 950.5L348.5 940" stroke="#e3e3e3" stroke-width="3.4" stroke-linecap="round"/>
<path d="M352 933a5.5 5.5 0 1 0 4.5 6.5L353 941L350 938.5L352.5 934z" fill="#e3e3e3"/>
<circle cx="338.6" cy="950" r="1" fill="#313131"/>
<rect x="393" y="933.1" width="21.1" height="19.7" fill="#e3e3e3"/>
<path d="M400 952.8V933.1M407.2 952.8V933.1" stroke="#313131" stroke-width="1"/>
<rect x="398" y="933.1" width="3.2" height="12" fill="#313131"/><rect x="405.7" y="933.1" width="3.2" height="12" fill="#313131"/>
<rect x="393.8" y="933.1" width="3.2" height="11.5" fill="#e3e3e3"/>
<rect x="451.0" y="933.3" width="3.6" height="3.3" fill="#e3e3e3"/>
<rect x="451.0" y="943.2" width="3.6" height="3.3" fill="#e3e3e3"/>
<rect x="456.3" y="933.3" width="3.6" height="3.3" fill="#e3e3e3"/>
<rect x="456.3" y="943.2" width="3.6" height="3.3" fill="#e3e3e3"/>
<rect x="461.6" y="933.3" width="3.6" height="3.3" fill="#e3e3e3"/>
<rect x="461.6" y="943.2" width="3.6" height="3.3" fill="#e3e3e3"/>
<rect x="466.9" y="933.3" width="3.6" height="3.3" fill="#e3e3e3"/>
<rect x="466.9" y="943.2" width="3.6" height="3.3" fill="#e3e3e3"/>
<rect x="453.7" y="938.3" width="3.6" height="3.3" fill="#e3e3e3"/>
<rect x="459.0" y="938.3" width="3.6" height="3.3" fill="#e3e3e3"/>
<rect x="464.3" y="938.3" width="3.6" height="3.3" fill="#e3e3e3"/>
<rect x="453" y="948.5" width="16.5" height="3.3" fill="#e3e3e3"/>
<circle cx="906" cy="943.1" r="11.5" fill="none" stroke="#5c5c5c" stroke-width="5.5"/>
<path d="M906 929V934.5M906 951.7V957.2M892 943.1H897.5M914.5 943.1H920" stroke="#313131" stroke-width="1.6"/>
<path d="M902.8 938.8L911.5 943.4L902.8 948z" fill="#f0f0f0"/>
<path d="M965 938.5A7.6 7.6 0 1 0 976.2 938.5" fill="none" stroke="#4aa8e2" stroke-width="2.8"/>
<path d="M970.6 932.8V945" stroke="#4aa8e2" stroke-width="2.8"/>
</svg>
</body></html>
